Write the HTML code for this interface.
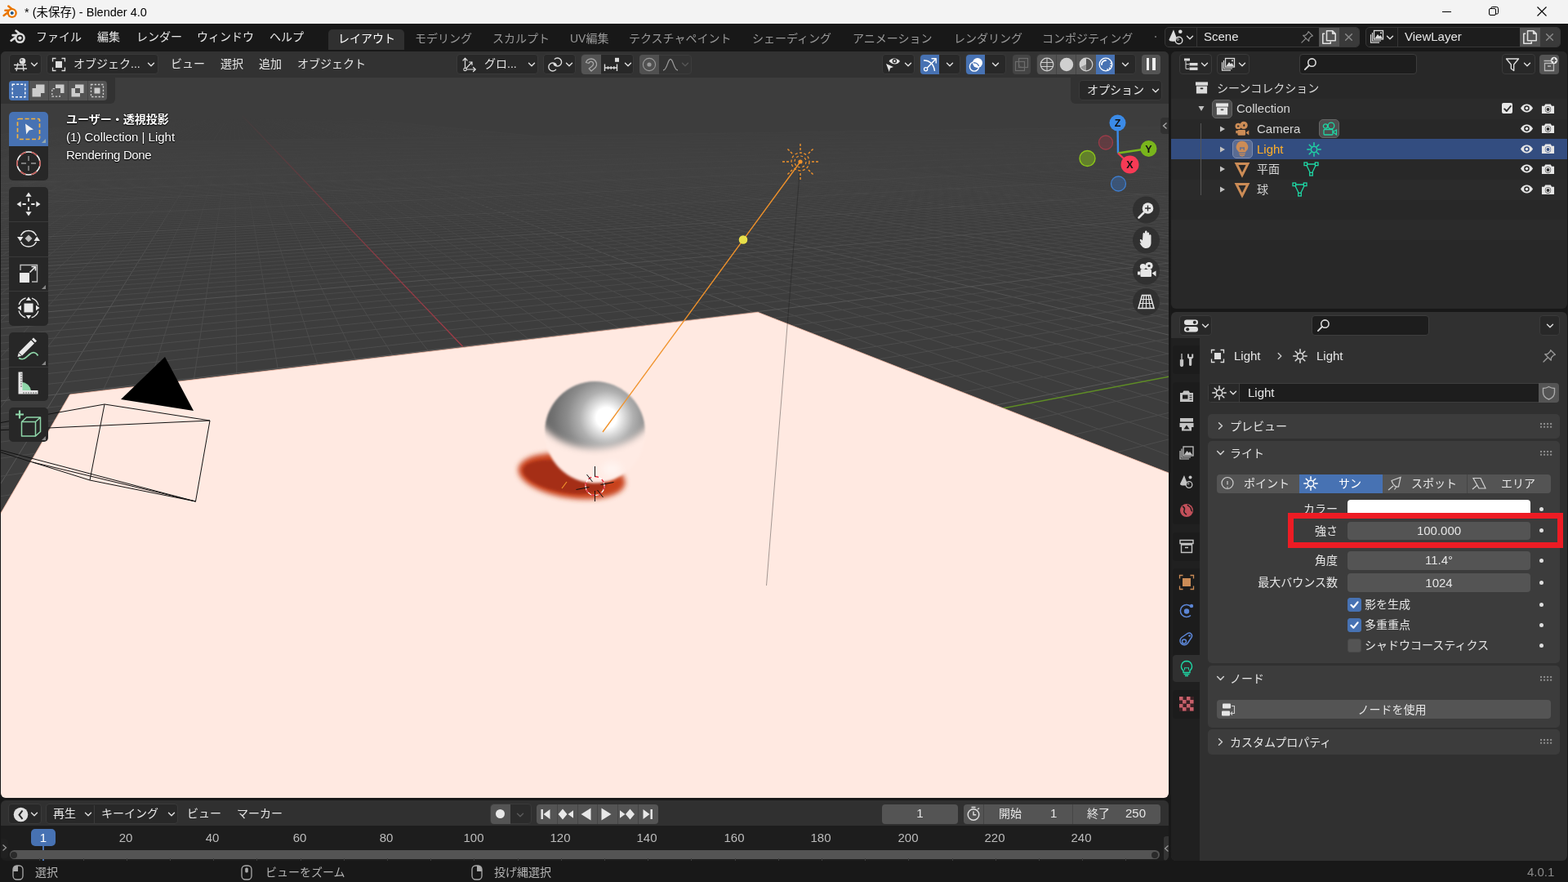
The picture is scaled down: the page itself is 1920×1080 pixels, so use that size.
<!DOCTYPE html>
<html lang="ja">
<head>
<meta charset="utf-8">
<title>Blender</title>
<style>
*{box-sizing:border-box;margin:0;padding:0}
html,body{width:1920px;height:1080px;overflow:hidden;background:#181818}
body{font-family:"Liberation Sans","Noto Sans CJK JP",sans-serif;font-size:14px;color:#e6e6e6;position:relative;-webkit-font-smoothing:antialiased}
.abs{position:absolute}
.t{position:absolute;white-space:nowrap;line-height:20px;height:20px;will-change:transform}
.l{font-size:15px}
svg{position:absolute;overflow:visible}
.btn{position:absolute;border-radius:4px;background:#282828;border:1px solid #3a3a3a}
.fld{position:absolute;border-radius:4px;background:#545454}
.dk{position:absolute;border-radius:4px;background:#1d1d1d;border:1px solid #3d3d3d}
/* regions */
#title{position:absolute;left:0;top:0;width:1920px;height:29px;background:#f3f3f3;color:#000}
#topbar{position:absolute;left:0;top:29px;width:1920px;height:34px;background:#181818}
#v3d{position:absolute;left:1px;top:63px;width:1430px;height:914px;background:#3d3d3d;border-radius:6px;overflow:hidden}
#tl{position:absolute;left:1px;top:980px;width:1430px;height:74px;background:#1d1d1d;border-radius:6px;overflow:hidden}
#ol{position:absolute;left:1434px;top:63px;width:485px;height:315px;background:#282828;border-radius:6px;overflow:hidden}
#pr{position:absolute;left:1434px;top:382px;width:485px;height:672px;background:#303030;border-radius:6px;overflow:hidden}
#st{position:absolute;left:0;top:1054px;width:1920px;height:26px;background:#181818;color:#b0b0b0}
</style>
</head>
<body>
<svg width="0" height="0" style="position:absolute">
<defs>
<symbol id="i-blender" viewBox="0 0 20 18">
  <g fill="none" stroke="currentColor" stroke-linecap="round" stroke-width="2.7">
    <path d="M1.700 13.800 L8.500 8.600"/><path d="M3.600 7.100 L11 7.100"/><path d="M7.700 1.700 L13 6"/>
  </g>
  <circle cx="12.400" cy="10.600" r="6.400" fill="currentColor"/>
  <circle cx="12.400" cy="10.600" r="3.900" fill="var(--in,#fff)"/>
  <circle cx="12.400" cy="10.600" r="2.200" fill="var(--pu,#265787)"/>
</symbol>
<symbol id="i-chev" viewBox="0 0 10 10"><path d="M1.5 3.2 L5 6.8 L8.5 3.2" fill="none" stroke="currentColor" stroke-width="1.4" stroke-linecap="round" stroke-linejoin="round"/></symbol>
<symbol id="i-chevr" viewBox="0 0 10 10"><path d="M3.2 1.5 L6.8 5 L3.2 8.5" fill="none" stroke="currentColor" stroke-width="1.3" stroke-linecap="round" stroke-linejoin="round"/></symbol>
<symbol id="i-x" viewBox="0 0 10 10"><path d="M1.5 1.5 L8.5 8.5 M8.5 1.5 L1.5 8.5" fill="none" stroke="currentColor" stroke-width="1.3" stroke-linecap="round"/></symbol>
<symbol id="i-copy" viewBox="0 0 16 16"><path d="M5.5 1.5h6l3 3v7h-9z M11.5 1.5v3h3" fill="none" stroke="currentColor" stroke-width="1.3" stroke-linejoin="round"/><path d="M3.5 4.5h-2v10h8v-2" fill="none" stroke="currentColor" stroke-width="1.3" stroke-linejoin="round"/></symbol>
<symbol id="i-pin" viewBox="0 0 16 16"><path d="M9.5 1.5 L14.5 6.5 L12.8 7 L10.2 9.8 L10 12.6 L3.4 6 L6.2 5.8 L9 3.2 Z M6.5 9.5 L1.8 14.2" fill="none" stroke="currentColor" stroke-width="1.2" stroke-linejoin="round" stroke-linecap="round"/></symbol>
<symbol id="i-search" viewBox="0 0 16 16"><circle cx="9.8" cy="6.2" r="4.4" fill="none" stroke="currentColor" stroke-width="1.5"/><path d="M6.6 9.4 L1.8 14.2" stroke="currentColor" stroke-width="1.7" stroke-linecap="round"/></symbol>
<symbol id="i-eye" viewBox="0 0 18 12"><path d="M0.8 6 C3.5 1.6 6.5 0.6 9 0.6 C11.5 0.6 14.5 1.6 17.2 6 C14.5 10.4 11.5 11.4 9 11.4 C6.5 11.4 3.5 10.4 0.8 6Z" fill="currentColor"/><circle cx="9" cy="6" r="3.6" fill="var(--bg,#282828)"/><circle cx="9" cy="6" r="1.9" fill="currentColor"/></symbol>
<symbol id="i-cam" viewBox="0 0 18 14"><path d="M1 3.5h3.2l1.3-2.3h7l1.3 2.3H17v9.8H1z" fill="currentColor"/><circle cx="9" cy="8" r="3.9" fill="var(--bg,#282828)"/><circle cx="9" cy="8" r="2.7" fill="none" stroke="currentColor" stroke-width="1.3"/></symbol>
<symbol id="i-box" viewBox="0 0 18 18"><rect x="1" y="1.5" width="16" height="4.5" fill="currentColor"/><path d="M2 7h14v9.5H2z" fill="currentColor"/><rect x="7" y="9" width="4" height="1.8" rx=".9" fill="var(--bg,#282828)"/></symbol>
<symbol id="i-sun" viewBox="0 0 18 18"><circle cx="9" cy="9" r="3.700" fill="none" stroke="currentColor" stroke-width="1.500"/><path d="M9 .8v3M9 14.2v3M.8 9h3M14.2 9h3M3.2 3.2l2.1 2.1M12.7 12.7l2.1 2.1M3.2 14.8l2.1-2.1M12.7 5.3l2.1-2.1" stroke="currentColor" stroke-width="1.500" stroke-linecap="round"/></symbol>
<symbol id="i-dots" viewBox="0 0 16 8"><g fill="currentColor"><rect x="0" y="1" width="2.2" height="2.2"/><rect x="4.3" y="1" width="2.2" height="2.2"/><rect x="8.6" y="1" width="2.2" height="2.2"/><rect x="12.9" y="1" width="2.2" height="2.2"/><rect x="0" y="5" width="2.2" height="2.2"/><rect x="4.3" y="5" width="2.2" height="2.2"/><rect x="8.6" y="5" width="2.2" height="2.2"/><rect x="12.9" y="5" width="2.2" height="2.2"/></g></symbol>
<symbol id="i-check" viewBox="0 0 12 12"><path d="M2.2 6.3 L4.9 9 L9.8 3" fill="none" stroke="currentColor" stroke-width="1.9" stroke-linecap="round" stroke-linejoin="round"/></symbol>
<symbol id="i-objmode" viewBox="0 0 18 18"><rect x="5" y="5" width="8" height="8" fill="currentColor"/><path d="M1.5 5.5v-4h4M12.5 1.5h4v4M16.5 12.5v4h-4M5.5 16.5h-4v-4" fill="none" stroke="currentColor" stroke-width="1.3"/></symbol>
<symbol id="i-layers" viewBox="0 0 18 18"><rect x="5.5" y="1.5" width="11" height="10.5" fill="none" stroke="currentColor" stroke-width="1.3"/><path d="M6.5 11 L10 6 L12 8.5 L13.5 7 L15.8 11Z" fill="currentColor"/><circle cx="14" cy="4.3" r="1.1" fill="currentColor"/><path d="M3.5 4v10h10.5M1.5 6.2v10h10.5" fill="none" stroke="currentColor" stroke-width="1.2"/></symbol>
</defs>
</svg>
<div id="title">
  <svg style="left:3px;top:6px;color:#ea7600;--in:#fff;--pu:#265787" width="19" height="17"><use href="#i-blender"/></svg>
  <div class="t" style="left:30px;top:5px;font-size:14.5px;color:#000">* (未保存) - Blender 4.0</div>
  <svg style="left:1765px;top:8px" width="14" height="14"><path d="M1 6.5h11" stroke="#000" stroke-width="1"/></svg>
  <svg style="left:1822px;top:7px" width="14" height="14"><rect x="1.5" y="3.5" width="8" height="8" rx="1.5" fill="none" stroke="#000"/><path d="M4 3.5 V2.8 A1.3 1.3 0 0 1 5.3 1.5 H10.5 A2 2 0 0 1 12.5 3.5 V8.7 A1.3 1.3 0 0 1 11.2 10 H9.5" fill="none" stroke="#000"/></svg>
  <svg style="left:1881px;top:7px" width="14" height="14"><path d="M1.5 1.5 L12.5 12.5 M12.5 1.5 L1.5 12.5" stroke="#000" stroke-width="1.1"/></svg>
</div>
<div id="topbar">
  <svg style="left:12px;top:7px;color:#dcdcdc;--in:#181818;--pu:#dcdcdc" width="20" height="18"><use href="#i-blender"/></svg>
  <div class="t" style="left:44px;top:6px">ファイル</div>
  <div class="t" style="left:119px;top:6px">編集</div>
  <div class="t" style="left:167px;top:6px">レンダー</div>
  <div class="t" style="left:241px;top:6px">ウィンドウ</div>
  <div class="t" style="left:330px;top:6px">ヘルプ</div>
  <div class="abs" style="left:402px;top:7px;width:93px;height:25px;background:#303030;border-radius:5px 5px 0 0"></div>
  <div class="t" style="left:414px;top:8px;color:#fff">レイアウト</div>
  <div class="t" style="left:508px;top:8px;color:#989898">モデリング</div>
  <div class="t" style="left:603px;top:8px;color:#989898">スカルプト</div>
  <div class="t" style="left:698px;top:8px;color:#989898">UV編集</div>
  <div class="t" style="left:770px;top:8px;color:#989898">テクスチャペイント</div>
  <div class="t" style="left:921px;top:8px;color:#989898">シェーディング</div>
  <div class="t" style="left:1044px;top:8px;color:#989898">アニメーション</div>
  <div class="t" style="left:1168px;top:8px;color:#989898">レンダリング</div>
  <div class="t" style="left:1276px;top:8px;color:#989898">コンポジティング</div>
  <div class="abs" style="left:1414px;top:15px;width:2px;height:2px;background:#666"></div>
  <!-- scene -->
  <div class="abs" style="left:1426px;top:4px;width:239px;height:25px;background:#1d1d1d;border:1px solid #373737;border-radius:5px"></div>
  <div class="abs" style="left:1465px;top:5px;width:1px;height:23px;background:#373737"></div>
  <div class="abs" style="left:1615px;top:5px;width:25px;height:23px;background:#545454"></div>
  <div class="abs" style="left:1640px;top:5px;width:24px;height:23px;background:#3a3a3a;border-radius:0 4px 4px 0"></div>
  <svg style="left:1430px;top:6px;color:#dcdcdc" width="22" height="22"><path d="M7 1.200 L11.500 13.500 A5 2.200 0 0 1 1.500 13.500Z" fill="currentColor"/><circle cx="15.300" cy="3.800" r="2.300" fill="currentColor"/><circle cx="13.500" cy="14.500" r="4.300" fill="#1d1d1d" stroke="currentColor" stroke-width="1.400"/><circle cx="12.300" cy="13.300" r="1.200" fill="none" stroke="currentColor" stroke-width=".8"/></svg>
  <svg style="left:1452px;top:12px;color:#dcdcdc" width="10" height="10"><use href="#i-chev"/></svg>
  <div class="t l" style="left:1474px;top:6px">Scene</div>
  <svg style="left:1592px;top:8px;color:#8a8a8a" width="17" height="17"><use href="#i-pin"/></svg>
  <svg style="left:1618px;top:7px;color:#e0e0e0" width="19" height="19"><use href="#i-copy"/></svg>
  <svg style="left:1646px;top:11px;color:#8a8a8a" width="11" height="11"><use href="#i-x"/></svg>
  <!-- viewlayer -->
  <div class="abs" style="left:1672px;top:4px;width:239px;height:25px;background:#1d1d1d;border:1px solid #373737;border-radius:5px"></div>
  <div class="abs" style="left:1711px;top:5px;width:1px;height:23px;background:#373737"></div>
  <div class="abs" style="left:1861px;top:5px;width:25px;height:23px;background:#545454"></div>
  <div class="abs" style="left:1886px;top:5px;width:24px;height:23px;background:#3a3a3a;border-radius:0 4px 4px 0"></div>
  <svg style="left:1677px;top:7px;color:#dcdcdc" width="18" height="18"><use href="#i-layers"/></svg>
  <svg style="left:1697px;top:12px;color:#dcdcdc" width="10" height="10"><use href="#i-chev"/></svg>
  <div class="t l" style="left:1720px;top:6px">ViewLayer</div>
  <svg style="left:1864px;top:7px;color:#e0e0e0" width="19" height="19"><use href="#i-copy"/></svg>
  <svg style="left:1892px;top:11px;color:#8a8a8a" width="11" height="11"><use href="#i-x"/></svg>
</div>
<div id="v3d">
<svg style="left:-1px;top:-63px" width="1432" height="1041" viewBox="0 0 1432 1041">
<defs>
<linearGradient id="gfade" x1="0" y1="131" x2="0" y2="420" gradientUnits="userSpaceOnUse"><stop offset="0" stop-color="#fff" stop-opacity="0"/><stop offset="0.08" stop-color="#fff" stop-opacity="0.1"/><stop offset="0.34" stop-color="#fff" stop-opacity="0.4"/><stop offset="0.65" stop-color="#fff" stop-opacity="0.75"/><stop offset="1" stop-color="#fff" stop-opacity="1"/></linearGradient>
<mask id="gmask"><rect x="0" y="0" width="1432" height="1041" fill="url(#gfade)"/></mask>
<radialGradient id="sph" cx="742.500" cy="511.500" r="80" gradientUnits="userSpaceOnUse"><stop offset="0" stop-color="#ffffff"/><stop offset="0.155" stop-color="#ffffff"/><stop offset="0.26" stop-color="#dedede"/><stop offset="0.41" stop-color="#b0b0b0"/><stop offset="0.6" stop-color="#8c8c8c"/><stop offset="0.8" stop-color="#727272"/><stop offset="1" stop-color="#606060"/></radialGradient>
<mask id="sphmask" maskUnits="userSpaceOnUse" x="600" y="400" width="260" height="260"><g filter="url(#b1)"><ellipse cx="728.500" cy="529" rx="61.500" ry="62" fill="#fff"/></g></mask><mask id="sphmask2" maskUnits="userSpaceOnUse" x="600" y="400" width="260" height="260"><g filter="url(#b4)"><ellipse cx="728.500" cy="499" rx="71" ry="50" fill="#fff"/></g></mask>
<clipPath id="sphclip"><ellipse cx="728.5" cy="529" rx="62" ry="63"/></clipPath>
<filter id="b1" x="-30%" y="-30%" width="160%" height="160%"><feGaussianBlur stdDeviation="1"/></filter>
<filter id="b4" x="-30%" y="-30%" width="160%" height="160%"><feGaussianBlur stdDeviation="4"/></filter>
<filter id="b3" x="-30%" y="-30%" width="160%" height="160%"><feGaussianBlur stdDeviation="3"/></filter>
<filter id="b2" x="-30%" y="-30%" width="160%" height="160%"><feGaussianBlur stdDeviation="1.6"/></filter>
<filter id="b6" x="-30%" y="-30%" width="160%" height="160%"><feGaussianBlur stdDeviation="5"/></filter>
</defs>
<g mask="url(#gmask)"><polyline points="-27376.9,3391.0 147.8,147.4" stroke="#595959" stroke-width="1" fill="none"/><polyline points="-162693.9,19699.9 150.5,147.4" stroke="#4d4d4d" stroke-width="1" fill="none"/><polyline points="-75348.7,9387.3 153.2,147.4" stroke="#4d4d4d" stroke-width="1" fill="none"/><polyline points="-48292.0,6192.8 155.9,147.4" stroke="#4d4d4d" stroke-width="1" fill="none"/><polyline points="-35119.2,4637.5 158.6,147.3" stroke="#4d4d4d" stroke-width="1" fill="none"/><polyline points="-27325.7,3717.4 161.3,147.3" stroke="#4d4d4d" stroke-width="1" fill="none"/><polyline points="-22175.1,3109.3 163.9,147.3" stroke="#4d4d4d" stroke-width="1" fill="none"/><polyline points="-91885.3,12612.5 166.6,147.3" stroke="#4d4d4d" stroke-width="1" fill="none"/><polyline points="-52448.0,7427.5 169.3,147.3" stroke="#4d4d4d" stroke-width="1" fill="none"/><polyline points="-36159.8,5286.0 172.0,147.3" stroke="#4d4d4d" stroke-width="1" fill="none"/><polyline points="-27263.1,4116.4 174.6,147.3" stroke="#595959" stroke-width="1" fill="none"/><polyline points="-21657.1,3379.3 177.3,147.2" stroke="#4d4d4d" stroke-width="1" fill="none"/><polyline points="-126108.1,19287.0 179.9,147.2" stroke="#4d4d4d" stroke-width="1" fill="none"/><polyline points="-58730.1,9293.9 182.6,147.2" stroke="#4d4d4d" stroke-width="1" fill="none"/><polyline points="-37550.2,6152.6 185.2,147.2" stroke="#4d4d4d" stroke-width="1" fill="none"/><polyline points="-27184.9,4615.3 187.9,147.2" stroke="#4d4d4d" stroke-width="1" fill="none"/><polyline points="-21035.7,3703.3 190.5,147.2" stroke="#4d4d4d" stroke-width="1" fill="none"/><polyline points="-16965.1,3099.5 193.1,147.2" stroke="#4d4d4d" stroke-width="1" fill="none"/><polyline points="-69330.7,12443.2 195.8,147.1" stroke="#4d4d4d" stroke-width="1" fill="none"/><polyline points="-39502.6,7369.3 198.4,147.1" stroke="#4d4d4d" stroke-width="1" fill="none"/><polyline points="-27084.2,5256.9 201.0,147.1" stroke="#595959" stroke-width="1" fill="none"/><polyline points="-20276.7,4098.9 203.6,147.1" stroke="#4d4d4d" stroke-width="1" fill="none"/><polyline points="-15978.1,3367.7 206.2,147.1" stroke="#4d4d4d" stroke-width="1" fill="none"/><polyline points="-91034.3,18891.1 208.8,147.1" stroke="#4d4d4d" stroke-width="1" fill="none"/><polyline points="-42443.7,9202.3 211.4,147.0" stroke="#4d4d4d" stroke-width="1" fill="none"/><polyline points="-26950.0,6112.9 214.0,147.0" stroke="#4d4d4d" stroke-width="1" fill="none"/><polyline points="-19328.6,4593.2 216.6,147.0" stroke="#4d4d4d" stroke-width="1" fill="none"/><polyline points="-14795.1,3689.3 219.2,147.0" stroke="#4d4d4d" stroke-width="1" fill="none"/><polyline points="-11789.0,3089.8 221.7,147.0" stroke="#4d4d4d" stroke-width="1" fill="none"/><polyline points="-47379.6,12278.4 224.3,147.0" stroke="#4d4d4d" stroke-width="1" fill="none"/><polyline points="-26761.9,7312.1 226.9,147.0" stroke="#595959" stroke-width="1" fill="none"/><polyline points="-18110.6,5228.2 229.4,146.9" stroke="#4d4d4d" stroke-width="1" fill="none"/><polyline points="-13351.1,4081.7 232.0,146.9" stroke="#4d4d4d" stroke-width="1" fill="none"/><polyline points="-10339.5,3356.2 234.6,146.9" stroke="#4d4d4d" stroke-width="1" fill="none"/><polyline points="-57380.7,18511.3 237.1,146.9" stroke="#4d4d4d" stroke-width="1" fill="none"/><polyline points="-26479.6,9112.6 239.7,146.9" stroke="#4d4d4d" stroke-width="1" fill="none"/><polyline points="-16488.6,6073.8 242.2,146.9" stroke="#4d4d4d" stroke-width="1" fill="none"/><polyline points="-11549.1,4571.4 244.7,146.9" stroke="#4d4d4d" stroke-width="1" fill="none"/><polyline points="-8603.1,3675.4 247.3,146.8" stroke="#4d4d4d" stroke-width="1" fill="none"/><polyline points="-6646.5,3080.2 249.8,146.8" stroke="#4d4d4d" stroke-width="1" fill="none"/><polyline points="-26008.2,12118.1 252.3,146.8" stroke="#595959" stroke-width="1" fill="none"/><polyline points="-14221.3,7255.7 254.8,146.8" stroke="#4d4d4d" stroke-width="1" fill="none"/><polyline points="-9237.2,5199.7 257.3,146.8" stroke="#4d4d4d" stroke-width="1" fill="none"/><polyline points="-6485.5,4064.6 259.8,146.8" stroke="#4d4d4d" stroke-width="1" fill="none"/><polyline points="-4740.8,3344.8 262.3,146.8" stroke="#4d4d4d" stroke-width="1" fill="none"/><polyline points="-25062.8,18146.6 264.8,146.7" stroke="#4d4d4d" stroke-width="1" fill="none"/><polyline points="-10828.2,9024.6 267.3,146.7" stroke="#4d4d4d" stroke-width="1" fill="none"/><polyline points="-6163.2,6035.1 269.8,146.7" stroke="#4d4d4d" stroke-width="1" fill="none"/><polyline points="-3845.4,4549.8 272.3,146.7" stroke="#4d4d4d" stroke-width="1" fill="none"/><polyline points="-2459.4,3661.6 274.8,146.7" stroke="#4d4d4d" stroke-width="1" fill="none"/><polyline points="-1537.3,3070.7 277.3,146.7" stroke="#595959" stroke-width="1" fill="none"/><polyline points="-5193.9,11961.8 279.7,146.7" stroke="#4d4d4d" stroke-width="1" fill="none"/><polyline points="-1875.9,7200.2 282.2,146.6" stroke="#4d4d4d" stroke-width="1" fill="none"/><polyline points="-462.3,5171.6 284.7,146.6" stroke="#4d4d4d" stroke-width="1" fill="none"/><polyline points="320.9,4047.6 287.1,146.6" stroke="#4d4d4d" stroke-width="1" fill="none"/><polyline points="818.5,3333.5 289.6,146.6" stroke="#4d4d4d" stroke-width="1" fill="none"/><polyline points="5997.4,17796.0 292.0,146.6" stroke="#4d4d4d" stroke-width="1" fill="none"/><polyline points="4519.5,8938.3 294.5,146.6" stroke="#4d4d4d" stroke-width="1" fill="none"/><polyline points="4028.7,5997.0 296.9,146.6" stroke="#4d4d4d" stroke-width="1" fill="none"/><polyline points="3783.7,4528.4 299.4,146.6" stroke="#4d4d4d" stroke-width="1" fill="none"/><polyline points="3636.8,3647.9 301.8,146.5" stroke="#595959" stroke-width="1" fill="none"/><polyline points="3538.9,3061.2 304.2,146.5" stroke="#4d4d4d" stroke-width="1" fill="none"/><polyline points="15085.0,11809.6 306.7,146.5" stroke="#4d4d4d" stroke-width="1" fill="none"/><polyline points="10278.6,7145.6 309.1,146.5" stroke="#4d4d4d" stroke-width="1" fill="none"/><polyline points="8215.7,5143.7 311.5,146.5" stroke="#4d4d4d" stroke-width="1" fill="none"/><polyline points="7068.8,4030.8 313.9,146.5" stroke="#4d4d4d" stroke-width="1" fill="none"/><polyline points="6338.6,3322.2 316.3,146.5" stroke="#4d4d4d" stroke-width="1" fill="none"/><polyline points="35871.9,17458.8 318.7,146.4" stroke="#4d4d4d" stroke-width="1" fill="none"/><polyline points="19572.3,8853.7 321.1,146.4" stroke="#4d4d4d" stroke-width="1" fill="none"/><polyline points="14089.8,5959.3 323.5,146.4" stroke="#4d4d4d" stroke-width="1" fill="none"/><polyline points="11339.2,4507.2 325.9,146.4" stroke="#595959" stroke-width="1" fill="none"/><polyline points="9685.9,3634.3 328.3,146.4" stroke="#4d4d4d" stroke-width="1" fill="none"/><polyline points="8582.4,3051.8 330.7,146.4" stroke="#4d4d4d" stroke-width="1" fill="none"/><polyline points="34848.7,11661.3 333.0,146.4" stroke="#4d4d4d" stroke-width="1" fill="none"/><polyline points="22246.8,7091.8 335.4,146.3" stroke="#4d4d4d" stroke-width="1" fill="none"/><polyline points="16798.3,5116.2 337.8,146.3" stroke="#4d4d4d" stroke-width="1" fill="none"/><polyline points="13758.9,4014.1 340.2,146.3" stroke="#4d4d4d" stroke-width="1" fill="none"/><polyline points="11820.1,3311.1 342.5,146.3" stroke="#4d4d4d" stroke-width="1" fill="none"/><polyline points="64627.4,17134.3 344.9,146.3" stroke="#4d4d4d" stroke-width="1" fill="none"/><polyline points="34338.5,8770.7 347.2,146.3" stroke="#4d4d4d" stroke-width="1" fill="none"/><polyline points="24022.5,5922.1 349.6,146.3" stroke="#595959" stroke-width="1" fill="none"/><polyline points="18822.3,4486.2 351.9,146.3" stroke="#4d4d4d" stroke-width="1" fill="none"/><polyline points="15688.5,3620.9 354.3,146.2" stroke="#4d4d4d" stroke-width="1" fill="none"/><polyline points="13593.6,3042.4 356.6,146.2" stroke="#4d4d4d" stroke-width="1" fill="none"/><polyline points="54116.7,11516.7 358.9,146.2" stroke="#4d4d4d" stroke-width="1" fill="none"/><polyline points="34032.9,7038.9 361.3,146.2" stroke="#4d4d4d" stroke-width="1" fill="none"/><polyline points="25287.3,5089.0 363.6,146.2" stroke="#4d4d4d" stroke-width="1" fill="none"/><polyline points="20392.1,3997.5 365.9,146.2" stroke="#4d4d4d" stroke-width="1" fill="none"/><polyline points="17263.3,3300.0 368.2,146.2" stroke="#4d4d4d" stroke-width="1" fill="none"/><polyline points="92325.5,16821.7 370.5,146.1" stroke="#4d4d4d" stroke-width="1" fill="none"/><polyline points="48826.4,8689.2 372.8,146.1" stroke="#595959" stroke-width="1" fill="none"/><polyline points="33829.3,5885.4 375.1,146.1" stroke="#4d4d4d" stroke-width="1" fill="none"/><polyline points="26233.9,4465.4 377.4,146.1" stroke="#4d4d4d" stroke-width="1" fill="none"/><polyline points="21645.2,3607.5 379.7,146.1" stroke="#4d4d4d" stroke-width="1" fill="none"/><polyline points="18572.8,3033.1 382.0,146.1" stroke="#4d4d4d" stroke-width="1" fill="none"/><polyline points="72907.4,11375.7 384.3,146.1" stroke="#4d4d4d" stroke-width="1" fill="none"/><polyline points="45640.9,6986.7 386.6,146.1" stroke="#4d4d4d" stroke-width="1" fill="none"/><polyline points="33684.0,5062.0 388.9,146.0" stroke="#4d4d4d" stroke-width="1" fill="none"/><polyline points="26969.0,3981.2 391.2,146.0" stroke="#4d4d4d" stroke-width="1" fill="none"/><polyline points="22668.6,3288.9 393.4,146.0" stroke="#4d4d4d" stroke-width="1" fill="none"/><polyline points="119023.5,16520.4 395.7,146.0" stroke="#595959" stroke-width="1" fill="none"/><polyline points="63043.6,8609.3 398.0,146.0" stroke="#4d4d4d" stroke-width="1" fill="none"/><polyline points="43512.5,5849.2 400.2,146.0" stroke="#4d4d4d" stroke-width="1" fill="none"/><polyline points="33575.0,4444.8 402.5,146.0" stroke="#4d4d4d" stroke-width="1" fill="none"/><polyline points="27556.3,3594.2 404.8,146.0" stroke="#4d4d4d" stroke-width="1" fill="none"/><polyline points="23520.2,3023.8 407.0,145.9" stroke="#4d4d4d" stroke-width="1" fill="none"/><polyline points="91238.3,11238.1 409.2,145.9" stroke="#4d4d4d" stroke-width="1" fill="none"/><polyline points="57074.9,6935.3 411.5,145.9" stroke="#4d4d4d" stroke-width="1" fill="none"/><polyline points="41990.0,5035.4 413.7,145.9" stroke="#4d4d4d" stroke-width="1" fill="none"/><polyline points="33490.3,3964.9 416.0,145.9" stroke="#4d4d4d" stroke-width="1" fill="none"/><polyline points="28036.4,3278.0 418.2,145.9" stroke="#595959" stroke-width="1" fill="none"/><polyline points="144774.7,16229.7 420.4,145.9" stroke="#4d4d4d" stroke-width="1" fill="none"/><polyline points="76997.8,8530.9 422.6,145.9" stroke="#4d4d4d" stroke-width="1" fill="none"/><polyline points="53074.6,5813.4 424.9,145.8" stroke="#4d4d4d" stroke-width="1" fill="none"/><polyline points="40846.8,4424.4 427.1,145.8" stroke="#4d4d4d" stroke-width="1" fill="none"/><polyline points="33422.6,3581.1 429.3,145.8" stroke="#4d4d4d" stroke-width="1" fill="none"/><polyline points="28436.2,3014.7 431.5,145.8" stroke="#4d4d4d" stroke-width="1" fill="none"/><polyline points="24856.1,2608.0 433.7,145.8" stroke="#4d4d4d" stroke-width="1" fill="none"/><polyline points="22161.0,2301.9 435.9,145.8" stroke="#4d4d4d" stroke-width="1" fill="none"/><polyline points="20058.9,2063.1 438.1,145.8" stroke="#4d4d4d" stroke-width="1" fill="none"/><polyline points="18373.3,1871.6 440.3,145.8" stroke="#595959" stroke-width="1" fill="none"/><polyline points="239251.4,15163.5 3733.7,174.5" stroke="#595959" stroke-width="1" fill="none"/><polyline points="315250.7,20446.9 3715.0,174.3" stroke="#4d4d4d" stroke-width="1" fill="none"/><polyline points="89256.0,5869.7 3696.6,174.0" stroke="#4d4d4d" stroke-width="1" fill="none"/><polyline points="96557.0,6502.3 3678.3,173.8" stroke="#4d4d4d" stroke-width="1" fill="none"/><polyline points="105666.8,7291.5 3660.3,173.6" stroke="#4d4d4d" stroke-width="1" fill="none"/><polyline points="117352.8,8304.0 3642.4,173.4" stroke="#4d4d4d" stroke-width="1" fill="none"/><polyline points="132887.7,9649.9 3624.7,173.1" stroke="#4d4d4d" stroke-width="1" fill="none"/><polyline points="154547.8,11526.5 3607.3,172.9" stroke="#4d4d4d" stroke-width="1" fill="none"/><polyline points="186845.3,14324.7 3589.9,172.7" stroke="#4d4d4d" stroke-width="1" fill="none"/><polyline points="240167.2,18944.5 3572.8,172.5" stroke="#4d4d4d" stroke-width="1" fill="none"/><polyline points="71844.0,5743.1 3555.9,172.3" stroke="#595959" stroke-width="1" fill="none"/><polyline points="77094.2,6346.6 3539.1,172.1" stroke="#4d4d4d" stroke-width="1" fill="none"/><polyline points="83609.6,7095.5 3522.5,171.8" stroke="#4d4d4d" stroke-width="1" fill="none"/><polyline points="91910.2,8049.6 3506.0,171.6" stroke="#4d4d4d" stroke-width="1" fill="none"/><polyline points="102845.9,9306.6 3489.8,171.4" stroke="#4d4d4d" stroke-width="1" fill="none"/><polyline points="117908.7,11037.9 3473.6,171.2" stroke="#4d4d4d" stroke-width="1" fill="none"/><polyline points="139978.1,13574.7 3457.7,171.0" stroke="#4d4d4d" stroke-width="1" fill="none"/><polyline points="175424.3,17649.0 3441.9,170.8" stroke="#4d4d4d" stroke-width="1" fill="none"/><polyline points="55183.6,5622.0 3426.3,170.6" stroke="#4d4d4d" stroke-width="1" fill="none"/><polyline points="58559.8,6198.4 3410.8,170.4" stroke="#4d4d4d" stroke-width="1" fill="none"/><polyline points="62727.9,6909.9 3395.5,170.2" stroke="#595959" stroke-width="1" fill="none"/><polyline points="68003.6,7810.5 3380.3,170.1" stroke="#4d4d4d" stroke-width="1" fill="none"/><polyline points="74895.9,8987.2 3365.3,169.9" stroke="#4d4d4d" stroke-width="1" fill="none"/><polyline points="84282.3,10589.5 3350.4,169.7" stroke="#4d4d4d" stroke-width="1" fill="none"/><polyline points="97815.7,12899.9 3335.6,169.5" stroke="#4d4d4d" stroke-width="1" fill="none"/><polyline points="119023.5,16520.4 3321.0,169.3" stroke="#4d4d4d" stroke-width="1" fill="none"/><polyline points="157017.5,23006.5 3306.6,169.1" stroke="#4d4d4d" stroke-width="1" fill="none"/><polyline points="40888.9,6057.0 3292.2,168.9" stroke="#4d4d4d" stroke-width="1" fill="none"/><polyline points="42930.2,6734.0 3278.1,168.8" stroke="#4d4d4d" stroke-width="1" fill="none"/><polyline points="45498.1,7585.5 3264.0,168.6" stroke="#4d4d4d" stroke-width="1" fill="none"/><polyline points="48826.4,8689.2 3250.1,168.4" stroke="#595959" stroke-width="1" fill="none"/><polyline points="53311.5,10176.6 3236.3,168.2" stroke="#4d4d4d" stroke-width="1" fill="none"/><polyline points="59683.5,12289.6 3222.6,168.1" stroke="#4d4d4d" stroke-width="1" fill="none"/><polyline points="69450.1,15528.4 3209.1,167.9" stroke="#4d4d4d" stroke-width="1" fill="none"/><polyline points="86309.4,21119.2 3195.7,167.7" stroke="#4d4d4d" stroke-width="1" fill="none"/><polyline points="24022.5,5922.1 3182.4,167.6" stroke="#4d4d4d" stroke-width="1" fill="none"/><polyline points="24134.3,6566.9 3169.2,167.4" stroke="#4d4d4d" stroke-width="1" fill="none"/><polyline points="24274.0,7373.3 3156.1,167.2" stroke="#4d4d4d" stroke-width="1" fill="none"/><polyline points="24453.8,8410.7 3143.2,167.1" stroke="#4d4d4d" stroke-width="1" fill="none"/><polyline points="24693.7,9795.0 3130.4,166.9" stroke="#4d4d4d" stroke-width="1" fill="none"/><polyline points="25030.0,11735.0 3117.7,166.7" stroke="#595959" stroke-width="1" fill="none"/><polyline points="25535.1,14649.7 3105.1,166.6" stroke="#4d4d4d" stroke-width="1" fill="none"/><polyline points="26379.2,19519.6 3092.6,166.4" stroke="#4d4d4d" stroke-width="1" fill="none"/><polyline points="7906.9,5793.2 3080.2,166.3" stroke="#4d4d4d" stroke-width="1" fill="none"/><polyline points="6265.9,6408.1 3068.0,166.1" stroke="#4d4d4d" stroke-width="1" fill="none"/><polyline points="4224.9,7172.8 3055.8,166.0" stroke="#4d4d4d" stroke-width="1" fill="none"/><polyline points="1617.7,8149.7 3043.8,165.8" stroke="#4d4d4d" stroke-width="1" fill="none"/><polyline points="-1829.3,9441.3 3031.8,165.7" stroke="#4d4d4d" stroke-width="1" fill="none"/><polyline points="-6600.0,11228.8 3020.0,165.5" stroke="#4d4d4d" stroke-width="1" fill="none"/><polyline points="-13637.9,13865.8 3008.3,165.4" stroke="#4d4d4d" stroke-width="1" fill="none"/><polyline points="-25062.8,18146.6 2996.6,165.2" stroke="#595959" stroke-width="1" fill="none"/><polyline points="-7506.9,5669.9 2985.1,165.1" stroke="#4d4d4d" stroke-width="1" fill="none"/><polyline points="-10742.0,6257.0 2973.6,164.9" stroke="#4d4d4d" stroke-width="1" fill="none"/><polyline points="-14744.1,6983.2 2962.3,164.8" stroke="#4d4d4d" stroke-width="1" fill="none"/><polyline points="-19822.7,7904.7 2951.0,164.6" stroke="#4d4d4d" stroke-width="1" fill="none"/><polyline points="-26479.6,9112.6 2939.9,164.5" stroke="#4d4d4d" stroke-width="1" fill="none"/><polyline points="-35585.7,10764.9 2928.8,164.4" stroke="#4d4d4d" stroke-width="1" fill="none"/><polyline points="-48797.7,13162.2 2917.9,164.2" stroke="#4d4d4d" stroke-width="1" fill="none"/><polyline points="-69700.7,16955.1 2907.0,164.1" stroke="#4d4d4d" stroke-width="1" fill="none"/><polyline points="-22263.8,5551.9 2896.2,163.9" stroke="#4d4d4d" stroke-width="1" fill="none"/><polyline points="-26950.0,6112.9 2885.5,163.8" stroke="#595959" stroke-width="1" fill="none"/><polyline points="-15295.4,3553.3 2874.9,163.7" stroke="#4d4d4d" stroke-width="1" fill="none"/><polyline points="-10625.8,2527.7 2864.3,163.5" stroke="#4d4d4d" stroke-width="1" fill="none"/><polyline points="-8109.6,1975.1 2853.9,163.4" stroke="#4d4d4d" stroke-width="1" fill="none"/><polyline points="-6536.4,1629.6 2843.5,163.3" stroke="#4d4d4d" stroke-width="1" fill="none"/><polyline points="-5459.6,1393.1 2833.3,163.1" stroke="#4d4d4d" stroke-width="1" fill="none"/><polyline points="-4676.4,1221.1 2823.1,163.0" stroke="#4d4d4d" stroke-width="1" fill="none"/><polyline points="-4081.0,1090.3 2813.0,162.9" stroke="#4d4d4d" stroke-width="1" fill="none"/><polyline points="-3613.2,987.6 2802.9,162.8" stroke="#4d4d4d" stroke-width="1" fill="none"/><polyline points="-3235.9,904.7 2793.0,162.6" stroke="#4d4d4d" stroke-width="1" fill="none"/><polyline points="-2925.2,836.5 2783.1,162.5" stroke="#595959" stroke-width="1" fill="none"/><polyline points="-2664.8,779.3 2773.3,162.4" stroke="#4d4d4d" stroke-width="1" fill="none"/><polyline points="-2443.5,730.7 2763.6,162.3" stroke="#4d4d4d" stroke-width="1" fill="none"/><polyline points="-2253.0,688.9 2753.9,162.1" stroke="#4d4d4d" stroke-width="1" fill="none"/><polyline points="-2087.4,652.5 2744.4,162.0" stroke="#4d4d4d" stroke-width="1" fill="none"/><polyline points="-1942.1,620.6 2734.9,161.9" stroke="#4d4d4d" stroke-width="1" fill="none"/><polyline points="-1813.5,592.3 2725.5,161.8" stroke="#4d4d4d" stroke-width="1" fill="none"/><polyline points="-1698.9,567.2 2716.1,161.7" stroke="#4d4d4d" stroke-width="1" fill="none"/><polyline points="-1596.2,544.6 2706.8,161.5" stroke="#4d4d4d" stroke-width="1" fill="none"/><polyline points="-1503.6,524.3 2697.6,161.4" stroke="#4d4d4d" stroke-width="1" fill="none"/><polyline points="-1419.7,505.8 2688.5,161.3" stroke="#595959" stroke-width="1" fill="none"/><polyline points="-1343.3,489.1 2679.4,161.2" stroke="#4d4d4d" stroke-width="1" fill="none"/><polyline points="-1273.5,473.7 2670.4,161.1" stroke="#4d4d4d" stroke-width="1" fill="none"/><polyline points="-1209.3,459.6 2661.5,161.0" stroke="#4d4d4d" stroke-width="1" fill="none"/><polyline points="-1150.3,446.7 2652.6,160.9" stroke="#4d4d4d" stroke-width="1" fill="none"/><polyline points="-1095.7,434.7 2643.8,160.8" stroke="#4d4d4d" stroke-width="1" fill="none"/><polyline points="-1045.1,423.6 2635.1,160.6" stroke="#4d4d4d" stroke-width="1" fill="none"/><polyline points="-998.1,413.2 2626.4,160.5" stroke="#4d4d4d" stroke-width="1" fill="none"/><polyline points="-954.3,403.6 2617.8,160.4" stroke="#4d4d4d" stroke-width="1" fill="none"/><polyline points="-913.4,394.6 2609.3,160.3" stroke="#4d4d4d" stroke-width="1" fill="none"/><polyline points="-875.1,386.2 2600.8,160.2" stroke="#595959" stroke-width="1" fill="none"/><polyline points="-839.2,378.3 2592.4,160.1" stroke="#4d4d4d" stroke-width="1" fill="none"/><polyline points="-805.4,370.9 2584.0,160.0" stroke="#4d4d4d" stroke-width="1" fill="none"/><polyline points="-773.6,363.9 2575.7,159.9" stroke="#4d4d4d" stroke-width="1" fill="none"/><polyline points="-743.5,357.3 2567.5,159.8" stroke="#4d4d4d" stroke-width="1" fill="none"/><polyline points="-715.2,351.1 2559.3,159.7" stroke="#4d4d4d" stroke-width="1" fill="none"/><polyline points="-688.3,345.2 2551.2,159.6" stroke="#4d4d4d" stroke-width="1" fill="none"/><polyline points="-662.9,339.6 2543.1,159.5" stroke="#4d4d4d" stroke-width="1" fill="none"/><polyline points="-638.8,334.3 2535.1,159.4" stroke="#4d4d4d" stroke-width="1" fill="none"/><polyline points="-615.8,329.3 2527.1,159.3" stroke="#4d4d4d" stroke-width="1" fill="none"/><polyline points="-594.0,324.5 2519.3,159.2" stroke="#595959" stroke-width="1" fill="none"/><polyline points="-573.2,319.9 2511.4,159.1" stroke="#4d4d4d" stroke-width="1" fill="none"/><polyline points="-553.3,315.6 2503.6,159.0" stroke="#4d4d4d" stroke-width="1" fill="none"/><polyline points="-534.4,311.4 2495.9,158.9" stroke="#4d4d4d" stroke-width="1" fill="none"/><polyline points="-516.2,307.4 2488.2,158.8" stroke="#4d4d4d" stroke-width="1" fill="none"/><polyline points="-498.9,303.6 2480.6,158.7" stroke="#4d4d4d" stroke-width="1" fill="none"/><polyline points="-482.3,300.0 2473.0,158.6" stroke="#4d4d4d" stroke-width="1" fill="none"/><polyline points="-466.4,296.5 2465.5,158.5" stroke="#4d4d4d" stroke-width="1" fill="none"/><polyline points="-451.1,293.1 2458.1,158.4" stroke="#4d4d4d" stroke-width="1" fill="none"/><polyline points="-436.5,289.9 2450.6,158.3" stroke="#4d4d4d" stroke-width="1" fill="none"/><polyline points="-422.4,286.8 2443.3,158.2" stroke="#595959" stroke-width="1" fill="none"/><polyline points="-408.8,283.8 2436.0,158.1" stroke="#4d4d4d" stroke-width="1" fill="none"/><polyline points="-395.8,281.0 2428.7,158.0" stroke="#4d4d4d" stroke-width="1" fill="none"/><polyline points="-383.2,278.2 2421.5,157.9" stroke="#4d4d4d" stroke-width="1" fill="none"/><polyline points="-371.1,275.5 2414.3,157.9" stroke="#4d4d4d" stroke-width="1" fill="none"/><polyline points="-359.4,273.0 2407.2,157.8" stroke="#4d4d4d" stroke-width="1" fill="none"/><polyline points="-348.1,270.5 2400.1,157.7" stroke="#4d4d4d" stroke-width="1" fill="none"/><polyline points="-337.2,268.1 2393.1,157.6" stroke="#4d4d4d" stroke-width="1" fill="none"/><polyline points="-326.7,265.8 2386.1,157.5" stroke="#4d4d4d" stroke-width="1" fill="none"/><polyline points="-316.5,263.6 2379.2,157.4" stroke="#4d4d4d" stroke-width="1" fill="none"/><polyline points="-306.7,261.4 2372.3,157.3" stroke="#595959" stroke-width="1" fill="none"/><polyline points="-297.2,259.3 2365.5,157.2" stroke="#4d4d4d" stroke-width="1" fill="none"/><polyline points="-288.0,257.3 2358.7,157.2" stroke="#4d4d4d" stroke-width="1" fill="none"/><polyline points="-279.0,255.3 2351.9,157.1" stroke="#4d4d4d" stroke-width="1" fill="none"/><polyline points="-270.4,253.4 2345.2,157.0" stroke="#4d4d4d" stroke-width="1" fill="none"/><polyline points="-262.0,251.6 2338.5,156.9" stroke="#4d4d4d" stroke-width="1" fill="none"/><polyline points="-253.8,249.8 2331.9,156.8" stroke="#4d4d4d" stroke-width="1" fill="none"/><polyline points="-245.9,248.0 2325.3,156.7" stroke="#4d4d4d" stroke-width="1" fill="none"/><polyline points="-238.2,246.3 2318.8,156.7" stroke="#4d4d4d" stroke-width="1" fill="none"/><polyline points="-230.7,244.7 2312.3,156.6" stroke="#4d4d4d" stroke-width="1" fill="none"/><polyline points="-223.5,243.1 2305.9,156.5" stroke="#595959" stroke-width="1" fill="none"/><polyline points="-216.4,241.6 2299.4,156.4" stroke="#4d4d4d" stroke-width="1" fill="none"/><polyline points="-209.6,240.1 2293.1,156.3" stroke="#4d4d4d" stroke-width="1" fill="none"/><polyline points="-202.9,238.6 2286.7,156.2" stroke="#4d4d4d" stroke-width="1" fill="none"/><polyline points="-196.4,237.2 2280.4,156.2" stroke="#4d4d4d" stroke-width="1" fill="none"/><polyline points="-190.0,235.8 2274.2,156.1" stroke="#4d4d4d" stroke-width="1" fill="none"/><polyline points="-183.9,234.4 2268.0,156.0" stroke="#4d4d4d" stroke-width="1" fill="none"/><polyline points="-177.9,233.1 2261.8,155.9" stroke="#4d4d4d" stroke-width="1" fill="none"/><polyline points="-172.0,231.8 2255.7,155.9" stroke="#4d4d4d" stroke-width="1" fill="none"/><polyline points="-166.3,230.6 2249.6,155.8" stroke="#4d4d4d" stroke-width="1" fill="none"/><polyline points="-160.7,229.3 2243.5,155.7" stroke="#595959" stroke-width="1" fill="none"/><polyline points="-155.3,228.1 2237.5,155.6" stroke="#4d4d4d" stroke-width="1" fill="none"/><polyline points="-150.0,227.0 2231.5,155.5" stroke="#4d4d4d" stroke-width="1" fill="none"/><polyline points="-144.8,225.8 2225.5,155.5" stroke="#4d4d4d" stroke-width="1" fill="none"/><polyline points="-139.7,224.7 2219.6,155.4" stroke="#4d4d4d" stroke-width="1" fill="none"/><polyline points="-134.8,223.6 2213.8,155.3" stroke="#4d4d4d" stroke-width="1" fill="none"/><polyline points="-130.0,222.6 2207.9,155.3" stroke="#4d4d4d" stroke-width="1" fill="none"/><polyline points="-125.2,221.5 2202.1,155.2" stroke="#4d4d4d" stroke-width="1" fill="none"/><polyline points="-120.6,220.5 2196.3,155.1" stroke="#4d4d4d" stroke-width="1" fill="none"/><polyline points="-116.1,219.5 2190.6,155.0" stroke="#4d4d4d" stroke-width="1" fill="none"/><polyline points="-111.7,218.6 2184.9,155.0" stroke="#595959" stroke-width="1" fill="none"/><polyline points="-107.4,217.6 2179.2,154.9" stroke="#4d4d4d" stroke-width="1" fill="none"/><polyline points="-103.2,216.7 2173.6,154.8" stroke="#4d4d4d" stroke-width="1" fill="none"/><polyline points="-99.0,215.8 2168.0,154.7" stroke="#4d4d4d" stroke-width="1" fill="none"/><polyline points="-95.0,214.9 2162.4,154.7" stroke="#4d4d4d" stroke-width="1" fill="none"/><polyline points="-91.0,214.0 2156.9,154.6" stroke="#4d4d4d" stroke-width="1" fill="none"/><polyline points="-87.1,213.2 2151.4,154.5" stroke="#4d4d4d" stroke-width="1" fill="none"/><polyline points="-83.3,212.3 2145.9,154.5" stroke="#4d4d4d" stroke-width="1" fill="none"/><polyline points="-79.6,211.5 2140.5,154.4" stroke="#4d4d4d" stroke-width="1" fill="none"/><polyline points="-75.9,210.7 2135.1,154.3" stroke="#4d4d4d" stroke-width="1" fill="none"/><polyline points="-72.4,209.9 2129.7,154.3" stroke="#595959" stroke-width="1" fill="none"/><polyline points="-68.8,209.2 2124.3,154.2" stroke="#4d4d4d" stroke-width="1" fill="none"/><polyline points="-65.4,208.4 2119.0,154.1" stroke="#4d4d4d" stroke-width="1" fill="none"/><polyline points="-62.0,207.7 2113.8,154.1" stroke="#4d4d4d" stroke-width="1" fill="none"/><polyline points="-58.7,206.9 2108.5,154.0" stroke="#4d4d4d" stroke-width="1" fill="none"/><polyline points="-55.5,206.2 2103.3,153.9" stroke="#4d4d4d" stroke-width="1" fill="none"/><polyline points="-52.3,205.5 2098.1,153.9" stroke="#4d4d4d" stroke-width="1" fill="none"/><polyline points="-49.1,204.8 2092.9,153.8" stroke="#4d4d4d" stroke-width="1" fill="none"/><polyline points="-46.1,204.1 2087.8,153.7" stroke="#4d4d4d" stroke-width="1" fill="none"/><polyline points="-43.0,203.5 2082.7,153.7" stroke="#4d4d4d" stroke-width="1" fill="none"/><polyline points="-40.1,202.8 2077.6,153.6" stroke="#595959" stroke-width="1" fill="none"/><polyline points="-37.2,202.2 2072.6,153.5" stroke="#4d4d4d" stroke-width="1" fill="none"/><polyline points="-34.3,201.6 2067.5,153.5" stroke="#4d4d4d" stroke-width="1" fill="none"/><polyline points="-31.5,201.0 2062.6,153.4" stroke="#4d4d4d" stroke-width="1" fill="none"/><polyline points="-28.7,200.3 2057.6,153.4" stroke="#4d4d4d" stroke-width="1" fill="none"/><polyline points="-26.0,199.7 2052.7,153.3" stroke="#4d4d4d" stroke-width="1" fill="none"/><polyline points="-23.4,199.2 2047.7,153.2" stroke="#4d4d4d" stroke-width="1" fill="none"/><polyline points="-20.7,198.6 2042.9,153.2" stroke="#4d4d4d" stroke-width="1" fill="none"/><polyline points="-18.2,198.0 2038.0,153.1" stroke="#4d4d4d" stroke-width="1" fill="none"/><polyline points="-15.6,197.5 2033.2,153.0" stroke="#4d4d4d" stroke-width="1" fill="none"/><polyline points="-13.1,196.9 2028.4,153.0" stroke="#595959" stroke-width="1" fill="none"/><polyline points="-10.7,196.4 2023.6,152.9" stroke="#4d4d4d" stroke-width="1" fill="none"/><polyline points="-8.3,195.8 2018.9,152.9" stroke="#4d4d4d" stroke-width="1" fill="none"/><polyline points="-5.9,195.3 2014.1,152.8" stroke="#4d4d4d" stroke-width="1" fill="none"/><polyline points="-3.5,194.8 2009.5,152.7" stroke="#4d4d4d" stroke-width="1" fill="none"/><polyline points="-1.2,194.3 2004.8,152.7" stroke="#4d4d4d" stroke-width="1" fill="none"/><polyline points="1.0,193.8 2000.1,152.6" stroke="#4d4d4d" stroke-width="1" fill="none"/><polyline points="3.2,193.3 1995.5,152.6" stroke="#4d4d4d" stroke-width="1" fill="none"/><polyline points="5.4,192.8 1990.9,152.5" stroke="#4d4d4d" stroke-width="1" fill="none"/><polyline points="7.6,192.4 1986.4,152.5" stroke="#4d4d4d" stroke-width="1" fill="none"/><polyline points="9.7,191.9 1981.8,152.4" stroke="#595959" stroke-width="1" fill="none"/><polyline points="11.8,191.4 1977.3,152.3" stroke="#4d4d4d" stroke-width="1" fill="none"/><polyline points="13.9,191.0 1972.8,152.3" stroke="#4d4d4d" stroke-width="1" fill="none"/><polyline points="15.9,190.5 1968.3,152.2" stroke="#4d4d4d" stroke-width="1" fill="none"/><polyline points="17.9,190.1 1963.9,152.2" stroke="#4d4d4d" stroke-width="1" fill="none"/><polyline points="19.9,189.7 1959.4,152.1" stroke="#4d4d4d" stroke-width="1" fill="none"/><polyline points="21.8,189.2 1955.0,152.1" stroke="#4d4d4d" stroke-width="1" fill="none"/><polyline points="23.8,188.8 1950.7,152.0" stroke="#4d4d4d" stroke-width="1" fill="none"/><polyline points="25.6,188.4 1946.3,151.9" stroke="#4d4d4d" stroke-width="1" fill="none"/><polyline points="27.5,188.0 1942.0,151.9" stroke="#4d4d4d" stroke-width="1" fill="none"/><polyline points="29.3,187.6 1937.6,151.8" stroke="#595959" stroke-width="1" fill="none"/><polyline points="31.2,187.2 1933.4,151.8" stroke="#4d4d4d" stroke-width="1" fill="none"/><polyline points="32.9,186.8 1929.1,151.7" stroke="#4d4d4d" stroke-width="1" fill="none"/><polyline points="34.7,186.4 1924.8,151.7" stroke="#4d4d4d" stroke-width="1" fill="none"/><polyline points="36.4,186.0 1920.6,151.6" stroke="#4d4d4d" stroke-width="1" fill="none"/><polyline points="38.1,185.7 1916.4,151.6" stroke="#4d4d4d" stroke-width="1" fill="none"/><polyline points="39.8,185.3 1912.2,151.5" stroke="#4d4d4d" stroke-width="1" fill="none"/><polyline points="41.5,184.9 1908.1,151.5" stroke="#4d4d4d" stroke-width="1" fill="none"/><polyline points="43.1,184.6 1903.9,151.4" stroke="#4d4d4d" stroke-width="1" fill="none"/><polyline points="44.8,184.2 1899.8,151.4" stroke="#4d4d4d" stroke-width="1" fill="none"/><polyline points="46.4,183.8 1895.7,151.3" stroke="#595959" stroke-width="1" fill="none"/><polyline points="47.9,183.5 1891.7,151.3" stroke="#4d4d4d" stroke-width="1" fill="none"/><polyline points="49.5,183.2 1887.6,151.2" stroke="#4d4d4d" stroke-width="1" fill="none"/><polyline points="51.0,182.8 1883.6,151.2" stroke="#4d4d4d" stroke-width="1" fill="none"/><polyline points="52.6,182.5 1879.6,151.1" stroke="#4d4d4d" stroke-width="1" fill="none"/><polyline points="54.1,182.2 1875.6,151.1" stroke="#4d4d4d" stroke-width="1" fill="none"/><polyline points="55.5,181.8 1871.6,151.0" stroke="#4d4d4d" stroke-width="1" fill="none"/><polyline points="57.0,181.5 1867.6,151.0" stroke="#4d4d4d" stroke-width="1" fill="none"/><polyline points="58.5,181.2 1863.7,150.9" stroke="#4d4d4d" stroke-width="1" fill="none"/><polyline points="59.9,180.9 1859.8,150.9" stroke="#4d4d4d" stroke-width="1" fill="none"/><polyline points="61.3,180.6 1855.9,150.8" stroke="#595959" stroke-width="1" fill="none"/><polyline points="62.7,180.3 1852.0,150.8" stroke="#4d4d4d" stroke-width="1" fill="none"/><polyline points="64.0,180.0 1848.2,150.7" stroke="#4d4d4d" stroke-width="1" fill="none"/><polyline points="65.4,179.7 1844.3,150.7" stroke="#4d4d4d" stroke-width="1" fill="none"/><polyline points="66.7,179.4 1840.5,150.6" stroke="#4d4d4d" stroke-width="1" fill="none"/><polyline points="68.1,179.1 1836.7,150.6" stroke="#4d4d4d" stroke-width="1" fill="none"/><polyline points="69.4,178.8 1832.9,150.5" stroke="#4d4d4d" stroke-width="1" fill="none"/><polyline points="70.7,178.5 1829.2,150.5" stroke="#4d4d4d" stroke-width="1" fill="none"/><polyline points="71.9,178.2 1825.4,150.4" stroke="#4d4d4d" stroke-width="1" fill="none"/><polyline points="73.2,178.0 1821.7,150.4" stroke="#4d4d4d" stroke-width="1" fill="none"/><polyline points="74.5,177.7 1818.0,150.3" stroke="#595959" stroke-width="1" fill="none"/><polyline points="75.7,177.4 1814.3,150.3" stroke="#4d4d4d" stroke-width="1" fill="none"/><polyline points="76.9,177.1 1810.6,150.2" stroke="#4d4d4d" stroke-width="1" fill="none"/><polyline points="78.1,176.9 1807.0,150.2" stroke="#4d4d4d" stroke-width="1" fill="none"/><polyline points="79.3,176.6 1803.3,150.1" stroke="#4d4d4d" stroke-width="1" fill="none"/><polyline points="80.5,176.4 1799.7,150.1" stroke="#4d4d4d" stroke-width="1" fill="none"/><polyline points="81.6,176.1 1796.1,150.1" stroke="#4d4d4d" stroke-width="1" fill="none"/><polyline points="82.8,175.8 1792.5,150.0" stroke="#4d4d4d" stroke-width="1" fill="none"/><polyline points="83.9,175.6 1788.9,150.0" stroke="#4d4d4d" stroke-width="1" fill="none"/><polyline points="85.1,175.3 1785.4,149.9" stroke="#4d4d4d" stroke-width="1" fill="none"/><polyline points="86.2,175.1 1781.9,149.9" stroke="#595959" stroke-width="1" fill="none"/>
<line x1="297" y1="142" x2="566.6" y2="424.2" stroke="#a33a46" stroke-width="1.3"/>
<line x1="1228" y1="500" x2="1432" y2="461" stroke="#5f8d25" stroke-width="1.5"/>
</g>
<polygon points="85.5,483 928,382.3 1432,579.5 1432,1041 0,1041 0,630" fill="#ffe9e1" stroke="#f3b9a4" stroke-width="0.8"/>
<g filter="url(#b3)"><ellipse cx="700" cy="583" rx="66" ry="27" fill="#c8421f" transform="rotate(8 700 583)"/></g>
<g filter="url(#b2)"><ellipse cx="692" cy="584" rx="52" ry="19" fill="#a52e12" transform="rotate(10 692 584)"/></g>
<g filter="url(#b2)"><ellipse cx="728.500" cy="529" rx="61.500" ry="62.500" fill="#ffebe4"/></g>
<g mask="url(#sphmask)"><g mask="url(#sphmask2)"><rect x="600" y="440" width="260" height="140" fill="url(#sph)"/></g></g>
<ellipse cx="749" cy="575" rx="12" ry="9" fill="#fff" opacity=".5" filter="url(#b6)"/>
<line x1="980" y1="200" x2="938.5" y2="717" stroke="#1a1a1a" stroke-width="0.8" opacity=".5"/>
<line x1="980" y1="198" x2="738" y2="529" stroke="#f0922b" stroke-width="1.4"/>
<line x1="694" y1="590" x2="688" y2="598" stroke="#f0922b" stroke-width="1.2"/>
<circle cx="910" cy="293.5" r="5.3" fill="#e8e04a"/>
<g stroke="#f0922b" stroke-width="1.4" stroke-dasharray="3 2"><line x1="994.0" y1="198.0" x2="1002.0" y2="198.0"/><line x1="989.9" y1="207.9" x2="995.6" y2="213.6"/><line x1="980.0" y1="212.0" x2="980.0" y2="220.0"/><line x1="970.1" y1="207.9" x2="964.4" y2="213.6"/><line x1="966.0" y1="198.0" x2="958.0" y2="198.0"/><line x1="970.1" y1="188.1" x2="964.4" y2="182.4"/><line x1="980.0" y1="184.0" x2="980.0" y2="176.0"/><line x1="989.9" y1="188.1" x2="995.6" y2="182.4"/></g>
<circle cx="980" cy="198" r="11" fill="none" stroke="#f0922b" stroke-width="1.3" stroke-dasharray="3.2 2.4"/>
<circle cx="980" cy="198" r="7" fill="none" stroke="#f0922b" stroke-width="1.2" stroke-dasharray="3 2.5"/>
<circle cx="980" cy="198" r="2.6" fill="#f0922b"/>
<polygon points="202,437 148,489 237,503" fill="#000"/>
<g stroke="#111" stroke-width="1" fill="none"><polygon points="128,495 257,515 239.5,614 110,588"/><path d="M0 517.7 L128 495 M0 526.7 L257 515 M0 551 L239.5 614 M0 553.5 L110 588 M40 566 L239.5 614"/></g>
<circle cx="728.5" cy="595" r="11.5" fill="none" stroke="#fff" stroke-width="1.3"/>
<circle cx="728.5" cy="595" r="11.5" fill="none" stroke="#e8283a" stroke-width="1.3" stroke-dasharray="4.5 4.5"/>
<g stroke="#111" stroke-width="1"><path d="M728.5 571 v13 M728.5 601 v13 M735.5 593.5 l16 -3 M721.5 596.5 l-16 3 M725.5 590 l-7 -9 M731.5 600 l7 9"/></g>
</svg>
<!-- header bg -->
<div class="abs" style="left:0;top:0;width:1430px;height:32px;background:rgba(46,46,46,.72)"></div>
<div class="abs" style="left:0;top:32px;width:140px;height:32px;background:rgba(46,46,46,.72);border-radius:0 0 6px 0"></div>
<div class="abs" style="left:1310px;top:32px;width:120px;height:32px;background:rgba(46,46,46,.72);border-radius:0 0 0 6px"></div>
<!-- coordinates inside v3d: page x-1, page y-63 -->
<div class="btn" style="left:10px;top:3px;width:40px;height:25px"></div>
<svg style="left:15px;top:7px;color:#dcdcdc" width="20" height="18"><path d="M1 9.5h15M2 14h15M6 7l-2 10M12 7l1 10" fill="none" stroke="currentColor" stroke-width="1.3"/><circle cx="11.5" cy="4.8" r="3.8" fill="currentColor"/><circle cx="10.4" cy="3.6" r="1.2" fill="#555"/></svg>
<svg style="left:36px;top:11px;color:#dcdcdc" width="10" height="10"><use href="#i-chev"/></svg>
<div class="btn" style="left:56px;top:3px;width:137px;height:25px"></div>
<svg style="left:62px;top:7px;color:#dcdcdc" width="18" height="18"><use href="#i-objmode"/></svg>
<div class="t" style="left:89px;top:5px">オブジェク...</div>
<svg style="left:179px;top:11px;color:#dcdcdc" width="10" height="10"><use href="#i-chev"/></svg>
<div class="t" style="left:208px;top:5px">ビュー</div>
<div class="t" style="left:269px;top:5px">選択</div>
<div class="t" style="left:316px;top:5px">追加</div>
<div class="t" style="left:363px;top:5px">オブジェクト</div>
<!-- orientation -->
<div class="btn" style="left:558px;top:3px;width:100px;height:25px"></div>
<svg style="left:564px;top:6px;color:#dcdcdc" width="20" height="20"><path d="M4.5 16 V2.5 M2 5 L4.5 2.2 L7 5 M4.5 16 H17 M14.5 13.5 L17.3 16 L14.5 18.5 M4.5 16 L13 7 M9.5 7 H13 V10.5" fill="none" stroke="currentColor" stroke-width="1.2" stroke-linejoin="round" stroke-linecap="round"/><circle cx="4.5" cy="16" r="1.7" fill="#282828" stroke="currentColor" stroke-width="1.1"/></svg>
<div class="t" style="left:592px;top:5px">グロ...</div>
<svg style="left:645px;top:11px;color:#dcdcdc" width="10" height="10"><use href="#i-chev"/></svg>
<!-- pivot -->
<div class="btn" style="left:664px;top:3px;width:40px;height:25px"></div>
<svg style="left:669px;top:6px;color:#dcdcdc" width="20" height="20"><circle cx="6.800" cy="13" r="5" fill="none" stroke="currentColor" stroke-width="1.400" stroke-dasharray="26 5.400" stroke-dashoffset="-3"/><circle cx="12.600" cy="7" r="5" fill="none" stroke="currentColor" stroke-width="1.400" stroke-dasharray="26 5.400" stroke-dashoffset="12.500"/><circle cx="9.700" cy="10" r="1.500" fill="currentColor"/></svg>
<svg style="left:691px;top:11px;color:#dcdcdc" width="10" height="10"><use href="#i-chev"/></svg>
<!-- snap -->
<div class="btn" style="left:710px;top:3px;width:65px;height:25px"></div>
<div class="abs" style="left:711px;top:4px;width:24px;height:24px;background:#545454;border-radius:4px 0 0 4px"></div>
<svg style="left:714px;top:7px;color:#a8a8a8" width="18" height="18"><path d="M2.5 6.5 C4 1.5 11 0.5 14 4.5 C17 8.5 15.5 12 12 14.5 L9 17 L6.2 14 L9.5 11.5 C12 9.5 12 7.5 10.8 6.2 C9.5 4.8 6.8 5 6 7.5 Z" fill="none" stroke="currentColor" stroke-width="1.3" stroke-linejoin="round"/></svg>
<svg style="left:738px;top:6px;color:#dcdcdc" width="22" height="20"><path d="M1.500 9.500v8.500M5.500 12.300v3.400M9.200 12.300v3.400M12.900 12.300v3.400M16.500 9.500v8.500M1.500 14h15" stroke="currentColor" stroke-width="1.400" fill="none"/><rect x="14" y="1.800" width="5" height="5" fill="currentColor"/></svg>
<svg style="left:763px;top:11px;color:#dcdcdc" width="10" height="10"><use href="#i-chev"/></svg>
<!-- proportional -->
<div class="abs" style="left:782px;top:4px;width:64px;height:24px;background:#333;border:1px solid #3c3c3c;border-radius:4px"></div>
<div class="abs" style="left:782px;top:4px;width:24px;height:24px;background:#505050;border-radius:4px 0 0 4px"></div>
<svg style="left:784px;top:6px;color:#999" width="20" height="20"><circle cx="10" cy="10" r="7.6" fill="none" stroke="currentColor" stroke-width="1.1"/><circle cx="10" cy="10" r="2.6" fill="currentColor"/></svg>
<svg style="left:810px;top:7px;color:#999" width="20" height="18"><path d="M1 16 C6 16 6.5 2.5 10 2.5 C13.5 2.5 14 16 19 16" fill="none" stroke="currentColor" stroke-width="1.3"/></svg>
<svg style="left:833px;top:11px;color:#555" width="10" height="10"><use href="#i-chev"/></svg>
<!-- visibility -->
<div class="btn" style="left:1079px;top:3px;width:40px;height:25px"></div>
<svg style="left:1082px;top:5px;color:#e6e6e6" width="22" height="22"><path d="M5.500 7 C8 2.300 15.500 2.300 19 7 C15.500 11.700 10.500 11.700 5.500 7Z" fill="currentColor"/><circle cx="12.400" cy="6.800" r="2.700" fill="#282828"/><circle cx="12.400" cy="6.800" r="1.300" fill="currentColor"/><path d="M2 10 L11 14 L7 15.500 L5.800 20Z" fill="currentColor"/></svg>
<svg style="left:1106px;top:11px;color:#dcdcdc" width="10" height="10"><use href="#i-chev"/></svg>
<!-- gizmo -->
<div class="btn" style="left:1125px;top:3px;width:49.5px;height:25px"></div>
<div class="abs" style="left:1126px;top:4px;width:23px;height:24px;background:#4772b3;border-radius:4px 0 0 4px"></div>
<svg style="left:1127.500px;top:6px;color:#fff" width="20" height="20"><path d="M2 5 C9 4.5 14.5 9.5 15.5 18" fill="none" stroke="currentColor" stroke-width="1.4"/><path d="M5.5 15 L17 3 M12 2.8 H17.2 V8" fill="none" stroke="currentColor" stroke-width="1.4" stroke-linecap="round" stroke-linejoin="round"/><circle cx="4.6" cy="15.8" r="2.1" fill="#4772b3" stroke="currentColor" stroke-width="1.3"/></svg>
<svg style="left:1157px;top:11px;color:#dcdcdc" width="10" height="10"><use href="#i-chev"/></svg>
<!-- overlay -->
<div class="btn" style="left:1181px;top:3px;width:50px;height:25px"></div>
<div class="abs" style="left:1182px;top:4px;width:23px;height:24px;background:#4772b3;border-radius:4px 0 0 4px"></div>
<svg style="left:1183.500px;top:6px;color:#fff" width="20" height="20"><circle cx="12" cy="8" r="6" fill="currentColor"/><circle cx="8" cy="12.500" r="5.600" fill="none" stroke="currentColor" stroke-width="1.400"/><path d="M7 8 A5.500 5.500 0 0 1 13.500 12" fill="none" stroke="#4772b3" stroke-width="1.300"/></svg>
<svg style="left:1213px;top:11px;color:#dcdcdc" width="10" height="10"><use href="#i-chev"/></svg>
<!-- xray -->
<div class="abs" style="left:1238.500px;top:4px;width:22.500px;height:24px;background:#444;border-radius:4px"></div>
<svg style="left:1240.500px;top:7px;color:#6c6c6c" width="18" height="18"><rect x="5.5" y="1.5" width="11" height="11" fill="none" stroke="currentColor" stroke-width="1.2"/><rect x="1.5" y="5.5" width="11" height="11" fill="none" stroke="currentColor" stroke-width="1.2"/><path d="M6 9v3h4" fill="none" stroke="currentColor" stroke-width="1" stroke-dasharray="2 1.5"/></svg>
<!-- shading -->
<div class="btn" style="left:1268px;top:3px;width:122px;height:25px"></div>
<div class="abs" style="left:1269px;top:4px;width:72.500px;height:24px;background:#545454;border-radius:4px 0 0 4px"></div>
<div class="abs" style="left:1292px;top:4px;width:1px;height:24px;background:#444"></div>
<div class="abs" style="left:1316px;top:4px;width:1px;height:24px;background:#444"></div>
<div class="abs" style="left:1341px;top:4px;width:23.300px;height:24px;background:#4772b3"></div>
<svg style="left:1271.500px;top:6.500px;color:#d0d0d0" width="18" height="18"><circle cx="9" cy="9" r="7.8" fill="none" stroke="currentColor" stroke-width="1.2"/><path d="M9 1.2v15.6M1.5 6.5h15M1.5 11.5h15" stroke="currentColor" stroke-width="1.1" fill="none"/><path d="M9 1.2C4.5 5 4.5 13 9 16.8" stroke="currentColor" stroke-width="0" fill="none"/></svg>
<svg style="left:1295.500px;top:6.500px;color:#d0d0d0" width="18" height="18"><circle cx="9" cy="9" r="8.2" fill="currentColor"/></svg>
<svg style="left:1319.500px;top:6.500px;color:#d0d0d0" width="18" height="18"><circle cx="9" cy="9" r="7.8" fill="none" stroke="currentColor" stroke-width="1.2"/><path d="M9 9 V1.2 A7.8 7.8 0 0 0 2 12.5 Z" fill="currentColor"/><path d="M9 9 L2 12.5 A7.8 7.8 0 0 0 9 16.8Z" fill="currentColor" opacity=".55"/></svg>
<svg style="left:1343.500px;top:6.500px;color:#fff" width="18" height="18"><circle cx="9" cy="9" r="7.8" fill="none" stroke="currentColor" stroke-width="1.3"/><path d="M4 9 A5 5 0 0 1 9 4" fill="none" stroke="currentColor" stroke-width="1.8" stroke-linecap="round"/><path d="M15 7 A6.5 6.5 0 0 1 9 15.5" fill="none" stroke="currentColor" stroke-width="1.6" stroke-dasharray="1.5 1.5"/></svg>
<svg style="left:1372px;top:11px;color:#dcdcdc" width="10" height="10"><use href="#i-chev"/></svg>
<!-- pause -->
<div class="abs" style="left:1397px;top:4px;width:23px;height:24px;background:#545454;border-radius:4px"></div>
<div class="abs" style="left:1403px;top:8px;width:3.200px;height:15px;background:#eee"></div>
<div class="abs" style="left:1410.400px;top:8px;width:3.200px;height:15px;background:#eee"></div>
<!-- options -->
<div class="btn" style="left:1320px;top:35px;width:102px;height:25px"></div>
<div class="t" style="left:1330px;top:36.500px">オプション</div>
<svg style="left:1409px;top:43px;color:#dcdcdc" width="10" height="10"><use href="#i-chev"/></svg>
<!-- select mode icons -->
<div class="abs" style="left:10px;top:36px;width:120px;height:24px;background:#545454;border-radius:4px"></div>
<div class="abs" style="left:10px;top:36px;width:24px;height:24px;background:#4772b3;border-radius:4px 0 0 4px"></div>
<div class="abs" style="left:34px;top:36px;width:1px;height:24px;background:#444"></div>
<div class="abs" style="left:58px;top:36px;width:1px;height:24px;background:#444"></div>
<div class="abs" style="left:82px;top:36px;width:1px;height:24px;background:#444"></div>
<div class="abs" style="left:106px;top:36px;width:1px;height:24px;background:#444"></div>
<svg style="left:13px;top:39px" width="18" height="18"><rect x="1.2" y="1.2" width="15.6" height="15.6" fill="none" stroke="#fff" stroke-width="1.4" stroke-dasharray="3 2"/></svg>
<svg style="left:37px;top:39px" width="18" height="18"><path d="M6 1.5h10.5v10.5H12v4.5H1.5V6H6z" fill="#ccc"/></svg>
<svg style="left:61px;top:39px" width="18" height="18"><path d="M6 1.5h10.5v10.5H12V6H6z" fill="#ccc"/><path d="M5 6.7H1.8V16.2H11.3V13" fill="none" stroke="#ccc" stroke-width="1.3" stroke-dasharray="2.4 1.8"/></svg>
<svg style="left:85px;top:39px" width="18" height="18"><path d="M6 1.5h10.5v10.5H12v4.5H1.5V6H6z" fill="#ccc"/><rect x="6" y="6" width="6" height="6" fill="#545454"/></svg>
<svg style="left:109px;top:39px" width="18" height="18"><rect x="1.5" y="1.5" width="15" height="15" fill="none" stroke="#ccc" stroke-width="1.3" stroke-dasharray="2.4 1.8"/><rect x="5.5" y="5.5" width="7" height="7" fill="#ccc"/></svg>
<!-- text overlay -->
<div class="t" style="left:80px;top:73px;color:#fff;font-weight:bold;text-shadow:0 0 2px #000,0 1px 1px #000">ユーザー・透視投影</div>
<div class="t l" style="left:80px;top:95px;color:#fff;text-shadow:0 0 2px #000,0 1px 1px #000">(1) Collection | Light</div>
<div class="t l" style="left:80px;top:117px;color:#fff;text-shadow:0 0 2px #000,0 1px 1px #000;letter-spacing:-.35px">Rendering Done</div>
<!-- toolbar (coords inside v3d: x-1,y-63) -->
<div class="abs" style="left:10px;top:74px;width:48px;height:84px;background:#272727;border-radius:5px;overflow:hidden">
  <div class="abs" style="left:0;top:0;width:48px;height:42px;background:#4772b3"></div>
</div>
<svg style="left:18px;top:80px" width="32" height="30"><rect x="2.5" y="2.5" width="27" height="25" rx="1.5" fill="none" stroke="#f5b23c" stroke-width="1.7" stroke-dasharray="5 2.6"/><path d="M12 8.5 L22 15.5 L16.8 16.5 L13.2 21.5Z" fill="#f0f0f0"/></svg>
<svg style="left:50px;top:107px" width="6" height="6"><path d="M0 5L5 5L5 0Z" fill="#9aa"/></svg>
<svg style="left:18px;top:121px" width="32" height="32"><circle cx="16" cy="16" r="14" fill="none" stroke="#f2f2f2" stroke-width="1.6"/><circle cx="16" cy="16" r="14" fill="none" stroke="#c0504d" stroke-width="1.6" stroke-dasharray="7.3 7.3" stroke-dashoffset="3.6"/><path d="M16 7v6M16 19v6M7 16h6M19 16h6" stroke="#999" stroke-width="1.4"/></svg>
<div class="abs" style="left:10px;top:166px;width:48px;height:170px;background:#272727;border-radius:5px"></div>
<div class="abs" style="left:10px;top:208px;width:48px;height:1px;background:#3a3a3a"></div>
<div class="abs" style="left:10px;top:251px;width:48px;height:1px;background:#3a3a3a"></div>
<div class="abs" style="left:10px;top:293px;width:48px;height:1px;background:#3a3a3a"></div>
<svg style="left:18px;top:171px;color:#e8e8e8" width="32" height="32"><path d="M16 1.5l3.6 5.2h-7.2zM16 30.5l3.600-5.200h-7.200zM1.500 16l5.200-3.600v7.200zM30.500 16l-5.200-3.600v7.200z" fill="currentColor"/><path d="M16 8.500v4.300M16 19.200v4.300M8.500 16h4.300M19.200 16h4.300" stroke="currentColor" stroke-width="2"/></svg>
<svg style="left:18px;top:213px;color:#e8e8e8" width="32" height="32"><path d="M6.500 12.500 A10.500 10.500 0 0 1 25.500 12.500 M25.500 20 A10.500 10.500 0 0 1 6.500 20" fill="none" stroke="currentColor" stroke-width="1.500"/><path d="M2 14h7.500l-3.700 5.500zM30 19h-7.500l3.700-5.500z" fill="currentColor"/><path d="M16 11.500l4.500 4.500-4.500 4.500-4.500-4.500z" fill="#bdbdbd"/></svg>
<svg style="left:18px;top:256px;color:#e8e8e8" width="32" height="32"><rect x="5" y="15" width="12" height="12" fill="currentColor"/><path d="M6 12V5.500h20.500V26H20" fill="none" stroke="#bbb" stroke-width="1.400"/><path d="M17.500 14.500L24 8M19.500 7.500H24.500V12.500" fill="none" stroke="currentColor" stroke-width="1.600"/></svg>
<svg style="left:50px;top:286px" width="6" height="6"><path d="M0 5L5 5L5 0Z" fill="#888"/></svg>
<svg style="left:18px;top:298px;color:#e8e8e8" width="32" height="32"><rect x="10.500" y="10.500" width="11" height="11" fill="currentColor"/><circle cx="16" cy="16" r="12.500" fill="none" stroke="currentColor" stroke-width="1.300" stroke-dasharray="12 7.600" stroke-dashoffset="-3.800"/><path d="M16 2.500l3.200 4.500h-6.400zM16 29.500l3.200-4.500h-6.400zM2.500 16l4.500-3.200v6.400zM29.500 16l-4.500-3.200v6.400z" fill="currentColor"/></svg>
<div class="abs" style="left:10px;top:344px;width:48px;height:84px;background:#272727;border-radius:5px"></div>
<div class="abs" style="left:10px;top:386px;width:48px;height:1px;background:#3a3a3a"></div>
<svg style="left:18px;top:349px" width="34" height="32"><path d="M4 19.500L19 4.500l4 4L8 23.500z" fill="#e8e8e8"/><path d="M20 3.500l2-2 4 4-2 2z" fill="#e8e8e8"/><path d="M2.500 25l1.200-4.800 3.600 3.600z" fill="#e8e8e8"/><path d="M4 26.500c6 3.500 9-1 13-4.500s8-3 10.500 1.500" fill="none" stroke="#8fd6a9" stroke-width="1.700"/></svg>
<svg style="left:50px;top:379px" width="6" height="6"><path d="M0 5L5 5L5 0Z" fill="#888"/></svg>
<svg style="left:18px;top:391px" width="32" height="32"><path d="M6.500 25.500V14.500A11 11 0 0 1 18.500 25.500z" fill="#8fd6a9" stroke="#8fd6a9" stroke-width="1"/><path d="M3.500 1.500h5v22.500h19v4.500h-24z" fill="#e6e6e6"/><path d="M6 4h2M6 7h2M6 10h2M6 13h2M6 16h2M6 19h2M10 26v2M13 26v2M16 26v2M19 26v2M22 26v2M25 26v2" stroke="#555" stroke-width=".9"/></svg>
<div class="abs" style="left:10px;top:436px;width:48px;height:42px;background:#272727;border-radius:5px"></div>
<svg style="left:16px;top:438px" width="38" height="38"><path d="M2 6.500h10M7 1.500v10" stroke="#8fd6a9" stroke-width="2.200"/><path d="M9.500 15.500l6-5.500h17v17.500l-6 5.500h-17zM9.500 15.500h17v17.500M26.500 15.500l6-5.500" fill="none" stroke="#8fd6a9" stroke-width="1.500" stroke-linejoin="round"/></svg>
<svg style="left:50px;top:471px" width="6" height="6"><path d="M0 5L5 5L5 0Z" fill="#888"/></svg>
<!-- gizmo (page 1240-1440 → v3d coords) -->
<svg style="left:0;top:0" width="1430" height="400" viewBox="1 63 1430 400">
  <g>
  <circle cx="1354" cy="174.500" r="8.500" fill="#7b3a44" fill-opacity=".55" stroke="#9c3b49" stroke-width="1.300"/>
  <circle cx="1331.500" cy="194" r="9.500" fill="#62802b" stroke="#8cc41a" stroke-width="1.400"/>
  <circle cx="1369.500" cy="225" r="9" fill="#3b5e8f" fill-opacity=".7" stroke="#3f7fd0" stroke-width="1.300"/>
  <line x1="1369" y1="187.500" x2="1368.500" y2="152" stroke="#3b8be8" stroke-width="2.400"/>
  <line x1="1369" y1="187.500" x2="1406" y2="182" stroke="#79b51c" stroke-width="2.400"/>
  <line x1="1369" y1="187.500" x2="1383" y2="201" stroke="#f03a52" stroke-width="2.400"/>
  <circle cx="1368.500" cy="150.500" r="10" fill="#3b8be8"/>
  <circle cx="1406.500" cy="182" r="10" fill="#79b51c"/>
  <circle cx="1383.500" cy="201.500" r="11" fill="#f73a55"/>
  <g font-family="Liberation Sans, sans-serif" font-weight="bold" font-size="12.500" text-anchor="middle" fill="#111">
    <text x="1368.500" y="155">Z</text><text x="1406.500" y="186.500">Y</text><text x="1383.500" y="206">X</text>
  </g>
  </g>
  <!-- nav buttons -->
  <g fill="#2e2e2e" fill-opacity=".85"><circle cx="1403.500" cy="257" r="16.500"/><circle cx="1403.500" cy="294" r="16.500"/><circle cx="1403.500" cy="332" r="16.500"/><circle cx="1403.500" cy="369.500" r="16.500"/></g>
  <g stroke="#e6e6e6" fill="none" stroke-width="2">
    <circle cx="1405.500" cy="255" r="6.800" fill="#e6e6e6" stroke="none"/><path d="M1400.500 260.500L1394.500 266.500" stroke-width="2.600" stroke-linecap="round"/><path d="M1402 255h7M1405.500 251.500v7" stroke="#2e2e2e" stroke-width="1.300"/>
  </g>
  <path d="M1397.500 297.500c-3-4-1.500-6 1.500-3l0.500-8c0-2 2.500-2 2.500 0v-2.500c0-2 2.600-2 2.600 0v2c0-2 2.500-2 2.500 0v2.500c0-1.800 2.400-1.800 2.400 0v8.500c0 4-2 7-6 7s-5.500-2.500-8-6.500z" fill="#e6e6e6"/>
  <g fill="#e6e6e6"><circle cx="1399.500" cy="326.500" r="3.600"/><circle cx="1407" cy="325.500" r="4.600"/><rect x="1396.500" y="330" width="13.500" height="9" rx="1"/><path d="M1410.500 334.500l5-3v7z"/><path d="M1393 332.500h3.500v4h-3.500z"/></g>
  <circle cx="1407" cy="325.500" r="1.600" fill="#2e2e2e"/>
  <g stroke="#e6e6e6" stroke-width="1.500" fill="none"><path d="M1398.500 361.500h10l4.500 16h-19z"/><path d="M1403.500 361.500v16M1396.800 366.500h13.500M1395.500 371.500h16M1400.800 361.500l-2.200 16M1406.200 361.500l2.200 16" stroke-width="1.200"/></g>
</svg>
<!-- sidebar toggle -->
<div class="abs" style="left:1420px;top:81px;width:10px;height:20px;background:rgba(46,46,46,.8);border-radius:4px 0 0 4px"></div>
<svg style="left:1421px;top:86px;color:#aaa" width="9" height="10"><path d="M6.500 1.500L2.500 5l4 3.500" fill="none" stroke="currentColor" stroke-width="1.300"/></svg>
</div>
<div id="tl">
<div class="abs" style="left:0;top:0;width:1430px;height:31px;background:#303030"></div>
<div class="btn" style="left:9px;top:4px;width:41px;height:25px"></div>
<svg style="left:14.500px;top:8px" width="19" height="19"><circle cx="9.500" cy="9.500" r="8.800" fill="#e0e0e0"/><path d="M11.500 4.500L7.500 9.800l4 5" fill="none" stroke="#282828" stroke-width="2"/></svg>
<svg style="left:36px;top:12px;color:#dcdcdc" width="10" height="10"><use href="#i-chev"/></svg>
<div class="btn" style="left:55px;top:4px;width:162px;height:25px"></div>
<div class="abs" style="left:114px;top:6px;width:1px;height:22px;background:#3a3a3a"></div>
<div class="t" style="left:64px;top:6px">再生</div>
<svg style="left:102px;top:12px;color:#dcdcdc" width="10" height="10"><use href="#i-chev"/></svg>
<div class="t" style="left:123px;top:6px">キーイング</div>
<svg style="left:204px;top:12px;color:#dcdcdc" width="10" height="10"><use href="#i-chev"/></svg>
<div class="t" style="left:228px;top:6px">ビュー</div>
<div class="t" style="left:289px;top:6px">マーカー</div>
<div class="btn" style="left:599px;top:4px;width:51px;height:25px;background:#2b2b2b"></div>
<div class="abs" style="left:600px;top:5px;width:24px;height:24px;background:#545454;border-radius:4px 0 0 4px"></div>
<div class="abs" style="left:606px;top:11px;width:11px;height:11px;border-radius:6px;background:#e8e8e8"></div>
<svg style="left:631px;top:13px;color:#5a5a5a" width="10" height="10"><use href="#i-chev"/></svg>
<div class="abs" style="left:656px;top:5px;width:149px;height:24px;background:#545454;border-radius:4px"></div>
<div class="abs" style="left:680.8px;top:5px;width:1px;height:24px;background:#454545"></div>
<div class="abs" style="left:705.6px;top:5px;width:1px;height:24px;background:#454545"></div>
<div class="abs" style="left:730.4px;top:5px;width:1px;height:24px;background:#454545"></div>
<div class="abs" style="left:755.2px;top:5px;width:1px;height:24px;background:#454545"></div>
<div class="abs" style="left:780.0px;top:5px;width:1px;height:24px;background:#454545"></div>
<svg style="left:656px;top:5px" width="149" height="24" fill="#e8e8e8"><path d="M5.500 6h2.400v12h-2.400zM8.500 12l8-6v12z"/><path d="M32 5.500l5.500 6.500-5.500 6.500-5.500-6.500zM38.500 12l6.500-4.800v9.600z"/><path d="M54.500 12l12-7.500v15z"/><path d="M79.500 4.500l12 7.500-12 7.500z"/><path d="M102 7.200l6.500 4.800-6.500 4.800zM114.500 5.500l5.500 6.500-5.500 6.500-5.500-6.500z"/><path d="M130.500 6l8 6-8 6zM139.500 6h2.400v12h-2.400z"/></svg>
<div class="fld" style="left:1079px;top:5px;width:93px;height:24px"></div>
<div class="t l" style="left:1079px;top:6px;width:93px;text-align:center">1</div>
<div class="fld" style="left:1179px;top:5px;width:241px;height:24px"></div>
<div class="abs" style="left:1202.500px;top:5px;width:1px;height:24px;background:#454545"></div>
<div class="abs" style="left:1311.500px;top:5px;width:1px;height:24px;background:#454545"></div>
<svg style="left:1182px;top:7px;color:#e0e0e0" width="19" height="19"><circle cx="9" cy="10.500" r="6.800" fill="none" stroke="currentColor" stroke-width="1.400"/><path d="M9 6.500v4.300h3.200M6.500 1.500h5M14 4l2 -1.500" fill="none" stroke="currentColor" stroke-width="1.400"/></svg>
<div class="t" style="left:1222px;top:6px">開始</div>
<div class="t l" style="left:1285px;top:6px">1</div>
<div class="t" style="left:1330px;top:6px">終了</div>
<div class="t l" style="left:1377px;top:6px">250</div>
<div class="t l" style="left:133.0px;top:36px;width:40px;text-align:center;color:#bcbcbc">20</div>
<div class="t l" style="left:239.4px;top:36px;width:40px;text-align:center;color:#bcbcbc">40</div>
<div class="t l" style="left:345.8px;top:36px;width:40px;text-align:center;color:#bcbcbc">60</div>
<div class="t l" style="left:452.2px;top:36px;width:40px;text-align:center;color:#bcbcbc">80</div>
<div class="t l" style="left:558.6px;top:36px;width:40px;text-align:center;color:#bcbcbc">100</div>
<div class="t l" style="left:665.0px;top:36px;width:40px;text-align:center;color:#bcbcbc">120</div>
<div class="t l" style="left:771.4px;top:36px;width:40px;text-align:center;color:#bcbcbc">140</div>
<div class="t l" style="left:877.8px;top:36px;width:40px;text-align:center;color:#bcbcbc">160</div>
<div class="t l" style="left:984.2px;top:36px;width:40px;text-align:center;color:#bcbcbc">180</div>
<div class="t l" style="left:1090.6px;top:36px;width:40px;text-align:center;color:#bcbcbc">200</div>
<div class="t l" style="left:1197.0px;top:36px;width:40px;text-align:center;color:#bcbcbc">220</div>
<div class="t l" style="left:1303.4px;top:36px;width:40px;text-align:center;color:#bcbcbc">240</div>
<div class="abs" style="left:51px;top:50px;width:2px;height:24px;background:#4772b3"></div>
<div class="abs" style="left:37.200px;top:35px;width:30px;height:21px;background:#4772b3;border-radius:5px"></div>
<div class="t l" style="left:37.200px;top:36px;width:30px;text-align:center;color:#fff">1</div>
<div class="abs" style="left:10.500px;top:61px;width:1408.500px;height:11px;background:#545454;border-radius:6px"></div>
<div class="abs" style="left:11.500px;top:62.500px;width:8px;height:8px;border-radius:4px;background:#2a2a2a"></div>
<div class="abs" style="left:1409px;top:63px;width:8px;height:8px;border-radius:4px;background:#2a2a2a"></div>
<div class="abs" style="left:47.3px;top:71px;width:1px;height:3px;background:#3c3c3c"></div>
<div class="abs" style="left:100.5px;top:71px;width:1px;height:3px;background:#3c3c3c"></div>
<div class="abs" style="left:153.7px;top:71px;width:1px;height:3px;background:#3c3c3c"></div>
<div class="abs" style="left:206.9px;top:71px;width:1px;height:3px;background:#3c3c3c"></div>
<div class="abs" style="left:260.1px;top:71px;width:1px;height:3px;background:#3c3c3c"></div>
<div class="abs" style="left:313.3px;top:71px;width:1px;height:3px;background:#3c3c3c"></div>
<div class="abs" style="left:366.5px;top:71px;width:1px;height:3px;background:#3c3c3c"></div>
<div class="abs" style="left:419.7px;top:71px;width:1px;height:3px;background:#3c3c3c"></div>
<div class="abs" style="left:472.9px;top:71px;width:1px;height:3px;background:#3c3c3c"></div>
<div class="abs" style="left:526.1px;top:71px;width:1px;height:3px;background:#3c3c3c"></div>
<div class="abs" style="left:579.3px;top:71px;width:1px;height:3px;background:#3c3c3c"></div>
<div class="abs" style="left:632.5px;top:71px;width:1px;height:3px;background:#3c3c3c"></div>
<div class="abs" style="left:685.7px;top:71px;width:1px;height:3px;background:#3c3c3c"></div>
<div class="abs" style="left:738.9px;top:71px;width:1px;height:3px;background:#3c3c3c"></div>
<div class="abs" style="left:792.1px;top:71px;width:1px;height:3px;background:#3c3c3c"></div>
<div class="abs" style="left:845.3px;top:71px;width:1px;height:3px;background:#3c3c3c"></div>
<div class="abs" style="left:898.5px;top:71px;width:1px;height:3px;background:#3c3c3c"></div>
<div class="abs" style="left:951.7px;top:71px;width:1px;height:3px;background:#3c3c3c"></div>
<div class="abs" style="left:1004.9px;top:71px;width:1px;height:3px;background:#3c3c3c"></div>
<div class="abs" style="left:1058.1px;top:71px;width:1px;height:3px;background:#3c3c3c"></div>
<div class="abs" style="left:1111.3px;top:71px;width:1px;height:3px;background:#3c3c3c"></div>
<div class="abs" style="left:1164.5px;top:71px;width:1px;height:3px;background:#3c3c3c"></div>
<div class="abs" style="left:1217.7px;top:71px;width:1px;height:3px;background:#3c3c3c"></div>
<div class="abs" style="left:1270.9px;top:71px;width:1px;height:3px;background:#3c3c3c"></div>
<div class="abs" style="left:1324.1px;top:71px;width:1px;height:3px;background:#3c3c3c"></div>
<div class="abs" style="left:1377.3px;top:71px;width:1px;height:3px;background:#3c3c3c"></div>
<div class="abs" style="left:1430.5px;top:71px;width:1px;height:3px;background:#3c3c3c"></div>
<div class="abs" style="left:0;top:47px;width:9px;height:24px;background:#202020;border-radius:0 4px 4px 0"></div>
<svg style="left:0.500px;top:53px;color:#999" width="8" height="10"><path d="M1.500 1.500L5.500 5l-4 3.500" fill="none" stroke="currentColor" stroke-width="1.200"/></svg>
<div class="abs" style="left:1424px;top:44px;width:6px;height:30px;background:#333;border-radius:3px 0 0 3px"></div>
<svg style="left:1423px;top:54px;color:#999" width="8" height="10"><path d="M6.500 1.500L2.500 5l4 3.500" fill="none" stroke="currentColor" stroke-width="1.200"/></svg>
</div>
<div id="ol">
<div class="abs" style="left:0;top:0;width:485px;height:32px;background:#282828"></div>
<div class="abs" style="left:0;top:33.00px;width:485px;height:25.05px;background:#282828"></div>
<div class="abs" style="left:0;top:57.75px;width:485px;height:25.05px;background:#2b2b2b"></div>
<div class="abs" style="left:0;top:82.50px;width:485px;height:25.05px;background:#282828"></div>
<div class="abs" style="left:0;top:107.25px;width:485px;height:25.05px;background:#334d80"></div>
<div class="abs" style="left:0;top:132.00px;width:485px;height:25.05px;background:#282828"></div>
<div class="abs" style="left:0;top:156.75px;width:485px;height:25.05px;background:#2b2b2b"></div>
<div class="abs" style="left:0;top:181.50px;width:485px;height:25.05px;background:#282828"></div>
<div class="abs" style="left:0;top:206.25px;width:485px;height:25.05px;background:#2b2b2b"></div>
<div class="abs" style="left:0;top:231.00px;width:485px;height:25.05px;background:#282828"></div>
<div class="btn" style="left:10px;top:3px;width:40px;height:25px"></div>
<svg style="left:15px;top:7px;color:#dcdcdc" width="20" height="18"><rect x="1" y="1.500" width="7" height="3" fill="currentColor"/><rect x="7.500" y="7" width="10" height="3.400" fill="currentColor"/><rect x="7.500" y="12.500" width="10" height="3.400" fill="currentColor"/><path d="M3 5v9.300h4M3 8.700h4" fill="none" stroke="currentColor" stroke-width="1"/></svg>
<svg style="left:36px;top:11px;color:#dcdcdc" width="10" height="10"><use href="#i-chev"/></svg>
<div class="btn" style="left:56px;top:3px;width:40px;height:25px"></div>
<svg style="left:61px;top:7px;color:#dcdcdc" width="18" height="18"><use href="#i-layers"/></svg>
<svg style="left:82px;top:11px;color:#dcdcdc" width="10" height="10"><use href="#i-chev"/></svg>
<div class="dk" style="left:157px;top:3px;width:144px;height:25px"></div>
<svg style="left:162px;top:7px;color:#dcdcdc" width="17" height="17"><use href="#i-search"/></svg>
<div class="btn" style="left:405px;top:3px;width:41px;height:25px"></div>
<svg style="left:409px;top:7px;color:#dcdcdc" width="18" height="18"><path d="M1.500 2h15l-5.800 7v7.500l-3.400-2.500v-5z" fill="none" stroke="currentColor" stroke-width="1.400" stroke-linejoin="round"/></svg>
<svg style="left:431px;top:11px;color:#dcdcdc" width="10" height="10"><use href="#i-chev"/></svg>
<div class="abs" style="left:451px;top:4px;width:24px;height:24px;background:#545454;border-radius:4px"></div>
<svg style="left:454px;top:6px;color:#b8b8b8" width="20" height="20"><path d="M2.500 5.500h9M3.500 8.500h11v9h-11z M7 12h4" fill="none" stroke="currentColor" stroke-width="1.300"/><circle cx="15" cy="5" r="4.200" fill="#e6e6e6"/><path d="M12.300 5h5.400M15 2.300v5.400" stroke="#4a4a4a" stroke-width="1.600"/></svg>
<div class="abs" style="left:36px;top:88px;width:1px;height:88px;background:#555"></div>
<svg style="left:29px;top:36.4px;color:#dcdcdc;--bg:#282828" width="17" height="17"><use href="#i-box"/></svg>
<div class="t" style="left:56px;top:35.4px;color:#d6d6d6">シーンコレクション</div>
<svg style="left:33px;top:66.1px" width="8" height="8"><path d="M.500 1L7.500 1L4 7z" fill="#c0c0c0"/></svg>
<div class="abs" style="left:50px;top:58.6px;width:25px;height:23px;background:#4e4e4e;border:1px solid #666;border-radius:5px"></div>
<svg style="left:54px;top:61.6px;color:#e6e6e6;--bg:#4e4e4e" width="17" height="17"><use href="#i-box"/></svg>
<div class="t l" style="left:80px;top:60.1px;color:#d6d6d6">Collection</div>
<svg style="left:59.0px;top:90.9px" width="8" height="8"><path d="M1 .500L7 4L1 7.500z" fill="#c0c0c0"/></svg>
<svg style="left:59.0px;top:115.6px" width="8" height="8"><path d="M1 .500L7 4L1 7.500z" fill="#c0c0c0"/></svg>
<svg style="left:59.0px;top:140.4px" width="8" height="8"><path d="M1 .500L7 4L1 7.500z" fill="#c0c0c0"/></svg>
<svg style="left:59.0px;top:165.1px" width="8" height="8"><path d="M1 .500L7 4L1 7.500z" fill="#c0c0c0"/></svg>
<svg style="left:77px;top:84.9px" width="20" height="20" fill="#cc8c56"><circle cx="5.200" cy="6.400" r="3.700"/><circle cx="12" cy="5.400" r="4.700"/><rect x="4.500" y="11" width="9.500" height="6.800" rx="1.200"/><path d="M14.500 14.400l3.800-3v6z"/><path d="M2.300 12h2.500v3.200h-2.500z"/><ellipse cx="12.300" cy="5.400" rx="1" ry="1.500" fill="#282828"/><ellipse cx="5.200" cy="6.500" rx="1.300" ry=".9" fill="#282828"/></svg>
<div class="t l" style="left:105px;top:84.9px;color:#d6d6d6">Camera</div>
<div class="abs" style="left:181px;top:83.4px;width:25px;height:23px;background:#4e4e4e;border:1px solid #666;border-radius:5px"></div>
<svg style="left:184px;top:85.9px" width="20" height="18" fill="none" stroke="#1fd6a4" stroke-width="1.300"><circle cx="5" cy="5.500" r="2.600"/><circle cx="12" cy="5" r="3.800"/><rect x="3" y="9.500" width="11" height="6.500" rx="1"/><path d="M14 12.500l4.500-2.500v6z"/></svg>
<div class="abs" style="left:75px;top:108.1px;width:25px;height:23px;background:#5a6c93;border:1px solid #7c8cb0;border-radius:5px"></div>
<svg style="left:78px;top:109.1px" width="18" height="20"><path d="M9 .800a7.200 7.200 0 0 0-4.300 13v.700h8.600v-.700a7.200 7.200 0 0 0-4.300-13z" fill="#cc8c56"/><path d="M6.800 8.200v3.600M11.200 8.200v3.600M6.200 9.200h5.600" stroke="#5a6c93" stroke-width="1.300" fill="none"/><path d="M5.200 16.300h7.600M6 18.300h6" stroke="#cc8c56" stroke-width="1.300"/><path d="M7.500 19.300h3l-1.500 .700z" fill="#cc8c56"/></svg>
<div class="t l" style="left:105px;top:109.6px;color:#ffaf29">Light</div>
<svg style="left:166px;top:110.6px;color:#1fd6a4" width="18" height="18"><use href="#i-sun"/></svg>
<svg style="left:78px;top:135.4px" width="18" height="18"><path d="M2 2.500h14L9 16.500z" fill="none" stroke="#cc8c56" stroke-width="3" stroke-linejoin="miter"/></svg>
<div class="t" style="left:105px;top:134.4px;color:#d6d6d6">平面</div>
<svg style="left:162px;top:135.4px" width="19" height="18" fill="none" stroke="#1fd6a4" stroke-width="1.300"><path d="M3 3h13M3.500 3.500L9 15M15.500 3.500L10 15"/><rect x="1" y="1" width="3.600" height="3.600" fill="#282828"/><rect x="14.400" y="1" width="3.600" height="3.600" fill="#282828"/><rect x="7.700" y="13.400" width="3.600" height="3.600" fill="#282828"/></svg>
<svg style="left:78px;top:160.1px" width="18" height="18"><path d="M2 2.500h14L9 16.500z" fill="none" stroke="#cc8c56" stroke-width="3" stroke-linejoin="miter"/></svg>
<div class="t" style="left:105px;top:159.1px;color:#d6d6d6">球</div>
<svg style="left:148px;top:160.1px" width="19" height="18" fill="none" stroke="#1fd6a4" stroke-width="1.300"><path d="M3 3h13M3.500 3.500L9 15M15.500 3.500L10 15"/><rect x="1" y="1" width="3.600" height="3.600" fill="#282828"/><rect x="14.400" y="1" width="3.600" height="3.600" fill="#282828"/><rect x="7.700" y="13.400" width="3.600" height="3.600" fill="#282828"/></svg>
<div class="abs" style="left:405px;top:63.1px;width:13px;height:13px;background:#e6e6e6;border-radius:2px"></div>
<svg style="left:406px;top:63.6px;color:#282828" width="12" height="12"><use href="#i-check"/></svg>
<svg style="left:427px;top:64.1px;color:#e6e6e6;--bg:#2b2b2b" width="17" height="11"><use href="#i-eye"/></svg>
<svg style="left:453px;top:62.6px;color:#e6e6e6;--bg:#2b2b2b" width="17" height="14"><use href="#i-cam"/></svg>
<svg style="left:427px;top:88.9px;color:#e6e6e6;--bg:#282828" width="17" height="11"><use href="#i-eye"/></svg>
<svg style="left:453px;top:87.4px;color:#e6e6e6;--bg:#282828" width="17" height="14"><use href="#i-cam"/></svg>
<svg style="left:427px;top:113.6px;color:#e6e6e6;--bg:#334d80" width="17" height="11"><use href="#i-eye"/></svg>
<svg style="left:453px;top:112.1px;color:#e6e6e6;--bg:#334d80" width="17" height="14"><use href="#i-cam"/></svg>
<svg style="left:427px;top:138.4px;color:#e6e6e6;--bg:#282828" width="17" height="11"><use href="#i-eye"/></svg>
<svg style="left:453px;top:136.9px;color:#e6e6e6;--bg:#282828" width="17" height="14"><use href="#i-cam"/></svg>
<svg style="left:427px;top:163.1px;color:#e6e6e6;--bg:#2b2b2b" width="17" height="11"><use href="#i-eye"/></svg>
<svg style="left:453px;top:161.6px;color:#e6e6e6;--bg:#2b2b2b" width="17" height="14"><use href="#i-cam"/></svg>
</div>
<div id="pr">
<div class="abs" style="left:0;top:32px;width:35px;height:640px;background:#202020"></div>
<div class="abs" style="left:2px;top:41px;width:33px;height:35px;background:#1c1c1c;border-radius:4px 0 0 4px"></div>
<div class="abs" style="left:2px;top:86px;width:33px;height:174px;background:#1c1c1c;border-radius:4px 0 0 4px"></div>
<div class="abs" style="left:2px;top:270px;width:33px;height:35px;background:#1c1c1c;border-radius:4px 0 0 4px"></div>
<div class="abs" style="left:2px;top:314px;width:33px;height:139px;background:#1c1c1c;border-radius:4px 0 0 4px"></div>
<div class="abs" style="left:2px;top:463px;width:33px;height:35px;background:#1c1c1c;border-radius:4px 0 0 4px"></div>
<div class="abs" style="left:2px;top:420px;width:33px;height:33px;background:#303030;border-radius:4px 0 0 4px"></div>
<div class="btn" style="left:10px;top:4px;width:40px;height:25px"></div>
<svg style="left:15px;top:8px" width="20" height="18" fill="#e0e0e0"><rect x="1" y="1.500" width="17" height="6.500" rx="3.200"/><rect x="1" y="10" width="17" height="6.500" rx="3.200"/><circle cx="13.800" cy="4.700" r="2" fill="#282828"/><circle cx="5.200" cy="13.300" r="2" fill="#282828"/></svg>
<svg style="left:37px;top:12px;color:#dcdcdc" width="10" height="10"><use href="#i-chev"/></svg>
<div class="dk" style="left:172px;top:4px;width:144px;height:25px"></div>
<svg style="left:178px;top:8px;color:#dcdcdc" width="17" height="17"><use href="#i-search"/></svg>
<div class="btn" style="left:451px;top:4px;width:25px;height:25px"></div>
<svg style="left:459px;top:12px;color:#dcdcdc" width="10" height="10"><use href="#i-chev"/></svg>
<svg style="left:9px;top:49px" width="20" height="20"><path d="M4 2v8M2.500 10h3v6a1.500 1.500 0 0 1-3 0z" fill="#c4c4c4" stroke="#c4c4c4" stroke-width="1.300"/><path d="M11 2.500v4.500l2 1.500v7a1.600 1.600 0 0 0 3.200 0v-7l2-1.500v-4.500l-2 0v3.500h-3.200v-3.500z" fill="#c4c4c4"/></svg>
<svg style="left:9px;top:93px" width="20" height="20"><path d="M2 6h3l1.500-2.500h6L14 6h4v11H2z" fill="#c4c4c4"/><rect x="5" y="8.500" width="6.500" height="5" fill="#1c1c1c"/><path d="M13.500 9h3M13.500 11.500h3M13.500 14h3" stroke="#1c1c1c" stroke-width="1"/></svg>
<svg style="left:9px;top:128px" width="20" height="20"><rect x="2" y="2" width="16" height="4.500" fill="#c4c4c4"/><path d="M4 8h12v9.500H4z" fill="#c4c4c4"/><path d="M6.500 15.500l3.500-5 3.500 5z" fill="#1c1c1c"/><path d="M1.500 8h3v5h-3zM15.500 8h3v5h-3z" fill="#c4c4c4"/></svg>
<svg style="left:9px;top:163px" width="20" height="20"><rect x="6" y="2" width="12" height="11" fill="none" stroke="#c4c4c4" stroke-width="1.300"/><path d="M7 12l3.500-5 2 2.500 1.500-1.500 3 4z" fill="#c4c4c4"/><path d="M4 4.500v10.500h11M2 7v10h11" fill="none" stroke="#c4c4c4" stroke-width="1.200"/></svg>
<svg style="left:9px;top:198px" width="20" height="20"><path d="M7 2l4 10.500a4.500 2 0 0 1-9 0z" fill="#c4c4c4"/><circle cx="14.500" cy="4.500" r="2" fill="#c4c4c4"/><circle cx="13" cy="13.500" r="3.800" fill="#1c1c1c" stroke="#c4c4c4" stroke-width="1.300"/><circle cx="11.800" cy="12.300" r="1" fill="none" stroke="#c4c4c4" stroke-width=".7"/></svg>
<svg style="left:9px;top:233px" width="20" height="20"><circle cx="10" cy="10" r="8" fill="#c2505a"/><path d="M5 5c2 1 3 3 2 5s1 4 3 5M11 3c1 2 3 2 4 4s0 3 2 4" fill="none" stroke="#1c1c1c" stroke-width="1.500"/></svg>
<svg style="left:9px;top:277px" width="20" height="20"><path d="M2 2.500h16v4H2zM3.500 8h13v9.500h-13z" fill="none" stroke="#c4c4c4" stroke-width="1.400"/><path d="M8 11.500h4" stroke="#c4c4c4" stroke-width="1.500"/></svg>
<svg style="left:9px;top:321px" width="20" height="20"><rect x="5" y="5" width="10" height="10" fill="#cc8c56"/><path d="M1.500 5.500v-4h4M14.500 1.500h4v4M18.500 14.500v4h-4M5.500 18.500h-4v-4" fill="none" stroke="#cc8c56" stroke-width="1.300"/></svg>
<svg style="left:9px;top:356px" width="20" height="20"><path d="M15 15.500A7.500 7.500 0 1 1 15.500 5" fill="none" stroke="#5c86d6" stroke-width="1.500"/><circle cx="10" cy="10.500" r="3.200" fill="#5c86d6"/><circle cx="16" cy="4" r="2.200" fill="#5c86d6"/></svg>
<svg style="left:9px;top:391px" width="20" height="20"><path d="M3 14.500a5 5 0 0 1 1-7l7.500-5a3.500 3.500 0 0 1 4.500 5l-5 7.500a5 5 0 0 1-8-.500z" fill="none" stroke="#5c86d6" stroke-width="1.500"/><circle cx="7" cy="12.500" r="2.500" fill="none" stroke="#5c86d6" stroke-width="1.500"/><circle cx="13.500" cy="5.500" r="1.200" fill="#5c86d6"/></svg>
<svg style="left:9px;top:426px" width="20" height="20"><path d="M10 1.500a6.500 6.500 0 0 0-4 11.600v2.400h8v-2.400a6.500 6.500 0 0 0-4-11.600z" fill="none" stroke="#1fd6a4" stroke-width="1.400"/><path d="M7.500 9.500v3M12.500 9.500v3M7.500 9.800h5" stroke="#1fd6a4" stroke-width="1" fill="none"/><path d="M6.500 17.500h7M8 19.500h4" stroke="#1fd6a4" stroke-width="1.300"/></svg>
<svg style="left:9px;top:470px" width="20" height="20"><rect x="1" y="1" width="18" height="18" fill="#3a2024"/><rect x="1" y="1" width="4.500" height="4.500" fill="#c8606a"/><rect x="10" y="1" width="4.500" height="4.500" fill="#c8606a"/><rect x="5" y="5" width="4.500" height="4.500" fill="#c8606a"/><rect x="14" y="5" width="4.500" height="4.500" fill="#c8606a"/><rect x="1" y="10" width="4.500" height="4.500" fill="#c8606a"/><rect x="10" y="10" width="4.500" height="4.500" fill="#c8606a"/><rect x="5" y="14" width="4.500" height="4.500" fill="#c8606a"/><rect x="14" y="14" width="4.500" height="4.500" fill="#c8606a"/></svg>
<svg style="left:48px;top:45px;color:#e0e0e0" width="18" height="18"><use href="#i-objmode"/></svg>
<div class="t l" style="left:77px;top:44px">Light</div>
<svg style="left:128px;top:49px;color:#ccc" width="10" height="10"><use href="#i-chevr"/></svg>
<svg style="left:149px;top:45px;color:#e0e0e0" width="18" height="18"><use href="#i-sun"/></svg>
<div class="t l" style="left:178px;top:44px">Light</div>
<svg style="left:454px;top:45px;color:#999" width="18" height="18"><use href="#i-pin"/></svg>
<div class="abs" style="left:45px;top:87px;width:430px;height:24px;background:#1d1d1d;border:1px solid #3d3d3d;border-radius:4px"></div>
<div class="abs" style="left:46px;top:88px;width:38px;height:22px;background:#282828;border-radius:3px 0 0 3px;border-right:1px solid #3d3d3d"></div>
<div class="abs" style="left:450px;top:87px;width:25px;height:24px;background:#545454;border-radius:0 4px 4px 0"></div>
<svg style="left:50px;top:90px;color:#e0e0e0" width="18" height="18"><use href="#i-sun"/></svg>
<svg style="left:71px;top:94px;color:#dcdcdc" width="10" height="10"><use href="#i-chev"/></svg>
<div class="t l" style="left:94px;top:89px">Light</div>
<svg style="left:454px;top:90px" width="17" height="18"><path d="M8.500 1.500c2.500 1.500 4.500 2 7 2v5c0 4-3 7-7 8.500c-4-1.500-7-4.500-7-8.500v-5c2.500 0 4.500-.500 7-2z" fill="none" stroke="#aaa" stroke-width="1.400"/></svg>
<div class="abs" style="left:45px;top:124.5px;width:431px;height:30.0px;background:#3c3c3c;border-radius:5px"></div>
<div class="abs" style="left:45px;top:157.7px;width:431px;height:272.7px;background:#3c3c3c;border-radius:5px"></div>
<div class="abs" style="left:45px;top:433.3px;width:431px;height:75.7px;background:#3c3c3c;border-radius:5px"></div>
<div class="abs" style="left:45px;top:511.2px;width:431px;height:30.6px;background:#3c3c3c;border-radius:5px"></div>
<svg style="left:55px;top:134.2px;color:#d0d0d0" width="11" height="11"><use href="#i-chevr"/></svg>
<div class="t" style="left:72px;top:129.7px">プレビュー</div>
<svg style="left:452px;top:135.2px;color:#8c8c8c" width="15" height="7.500"><use href="#i-dots"/></svg>
<svg style="left:55px;top:166.8px;color:#d0d0d0" width="11" height="11"><use href="#i-chev"/></svg>
<div class="t" style="left:72px;top:163.3px">ライト</div>
<svg style="left:452px;top:168.8px;color:#8c8c8c" width="15" height="7.500"><use href="#i-dots"/></svg>
<svg style="left:55px;top:442.7px;color:#d0d0d0" width="11" height="11"><use href="#i-chev"/></svg>
<div class="t" style="left:72px;top:439.2px">ノード</div>
<svg style="left:452px;top:444.7px;color:#8c8c8c" width="15" height="7.500"><use href="#i-dots"/></svg>
<svg style="left:55px;top:521.0px;color:#d0d0d0" width="11" height="11"><use href="#i-chevr"/></svg>
<div class="t" style="left:72px;top:516.5px">カスタムプロパティ</div>
<svg style="left:452px;top:522.0px;color:#8c8c8c" width="15" height="7.500"><use href="#i-dots"/></svg>
<div class="fld" style="left:56px;top:199px;width:409px;height:23px"></div>
<div class="abs" style="left:157px;top:199px;width:102px;height:23px;background:#4772b3"></div>
<div class="abs" style="left:362px;top:199px;width:1px;height:23px;background:#444"></div>
<svg style="left:60px;top:201px" width="18" height="18" fill="none" stroke="#d0d0d0" stroke-width="1.200"><circle cx="9" cy="8.500" r="7"/><path d="M9 6v4.500M9 13v1.500"/></svg>
<div class="t" style="left:89px;top:200px">ポイント</div>
<svg style="left:162px;top:201px;color:#fff" width="18" height="18"><use href="#i-sun"/></svg>
<div class="t" style="left:205px;top:200px;color:#fff">サン</div>
<svg style="left:264px;top:200px" width="20" height="20" fill="none" stroke="#d0d0d0" stroke-width="1.200"><path d="M6 6.500l11-4-2.500 11.500c-3 1-7-2-8.500-7.500zM8 13l-6 5M11.500 14.500l-2 3"/></svg>
<div class="t" style="left:294px;top:200px">スポット</div>
<svg style="left:367px;top:200px" width="20" height="20" fill="none" stroke="#d0d0d0" stroke-width="1.200"><path d="M3 3.500h9l6 12.500h-8z M8 12l-6 5" /></svg>
<div class="t" style="left:404px;top:200px">エリア</div>
<div class="t" style="left:44px;top:231.0px;width:160px;text-align:right">カラー</div>
<div class="abs" style="left:216px;top:230px;width:224px;height:23px;background:#fff;border-radius:4px"></div>
<div class="abs" style="left:451.3px;top:238.5px;width:5px;height:5px;border-radius:3px;background:#e0e0e0"></div>
<div class="t" style="left:44px;top:257.5px;width:160px;text-align:right">強さ</div>
<div class="fld" style="left:216px;top:256.7px;width:224px;height:22.8px"></div>
<div class="t l" style="left:216px;top:258.1px;width:224px;text-align:center">100.000</div>
<div class="abs" style="left:451.3px;top:265.0px;width:5px;height:5px;border-radius:3px;background:#e0e0e0"></div>
<div class="t" style="left:44px;top:294.0px;width:160px;text-align:right">角度</div>
<div class="fld" style="left:216px;top:293.0px;width:224px;height:22.7px"></div>
<div class="t l" style="left:216px;top:294.4px;width:224px;text-align:center">11.4°</div>
<div class="abs" style="left:451.3px;top:301.5px;width:5px;height:5px;border-radius:3px;background:#e0e0e0"></div>
<div class="t" style="left:44px;top:321.0px;width:160px;text-align:right">最大バウンス数</div>
<div class="fld" style="left:216px;top:320.3px;width:224px;height:22.7px"></div>
<div class="t l" style="left:216px;top:321.6px;width:224px;text-align:center">1024</div>
<div class="abs" style="left:451.3px;top:328.5px;width:5px;height:5px;border-radius:3px;background:#e0e0e0"></div>
<div class="abs" style="left:216px;top:349.8px;width:17px;height:17px;background:#4772b3;border-radius:3px;border:1px solid #4772b3"></div>
<svg style="left:218px;top:351.8px;color:#fff" width="13" height="13"><use href="#i-check"/></svg>
<div class="t" style="left:237px;top:348.3px">影を生成</div>
<div class="abs" style="left:451.3px;top:355.8px;width:5px;height:5px;border-radius:3px;background:#e0e0e0"></div>
<div class="abs" style="left:216px;top:374.9px;width:17px;height:17px;background:#4772b3;border-radius:3px;border:1px solid #4772b3"></div>
<svg style="left:218px;top:376.9px;color:#fff" width="13" height="13"><use href="#i-check"/></svg>
<div class="t" style="left:237px;top:373.4px">多重重点</div>
<div class="abs" style="left:451.3px;top:380.9px;width:5px;height:5px;border-radius:3px;background:#e0e0e0"></div>
<div class="abs" style="left:216px;top:399.9px;width:17px;height:17px;background:#545454;border-radius:3px;border:1px solid #4a4a4a"></div>
<div class="t" style="left:237px;top:398.4px">シャドウコースティクス</div>
<div class="abs" style="left:451.3px;top:405.9px;width:5px;height:5px;border-radius:3px;background:#e0e0e0"></div>
<div class="abs" style="left:143px;top:246px;width:337px;height:43px;border:7.700px solid #ed1c24"></div>
<div class="fld" style="left:56px;top:475px;width:409px;height:23px"></div>
<svg style="left:61px;top:477.5px" width="20" height="18"><rect x="2" y="1.500" width="10" height="6" rx="1" fill="#e6e6e6"/><rect x="1" y="10.500" width="10" height="6" rx="1" fill="#e6e6e6"/><path d="M13 4.500h3.500v9H12.500M14 11.500l-2 2 2 2" fill="none" stroke="#ccc" stroke-width="1.100"/></svg>
<div class="t" style="left:66px;top:476.5px;width:409px;text-align:center">ノードを使用</div>
</div>
<div id="st">
  <svg style="left:15px;top:5px" width="14" height="19"><rect x="1" y="1" width="12" height="17" rx="4.500" fill="none" stroke="#aaa" stroke-width="1.300"/><path d="M1 8V5.500A4.500 4.500 0 0 1 5.500 1H7V8z" fill="#aaa"/></svg>
  <div class="t" style="left:43px;top:4px;color:#b4b4b4">選択</div>
  <svg style="left:295px;top:5px" width="14" height="19"><rect x="1" y="1" width="12" height="17" rx="4.500" fill="none" stroke="#aaa" stroke-width="1.300"/><rect x="5.200" y="3.500" width="3.600" height="6" rx="1.500" fill="#aaa"/></svg>
  <div class="t" style="left:325px;top:4px;color:#b4b4b4">ビューをズーム</div>
  <svg style="left:577px;top:5px" width="14" height="19"><rect x="1" y="1" width="12" height="17" rx="4.500" fill="none" stroke="#aaa" stroke-width="1.300"/><path d="M13 8V5.500A4.500 4.500 0 0 0 8.500 1H7V8z" fill="#aaa"/></svg>
  <div class="t" style="left:605px;top:4px;color:#b4b4b4">投げ縄選択</div>
  <div class="t l" style="left:1870px;top:4px;color:#8a8a8a">4.0.1</div>
</div>
</body>
</html>
